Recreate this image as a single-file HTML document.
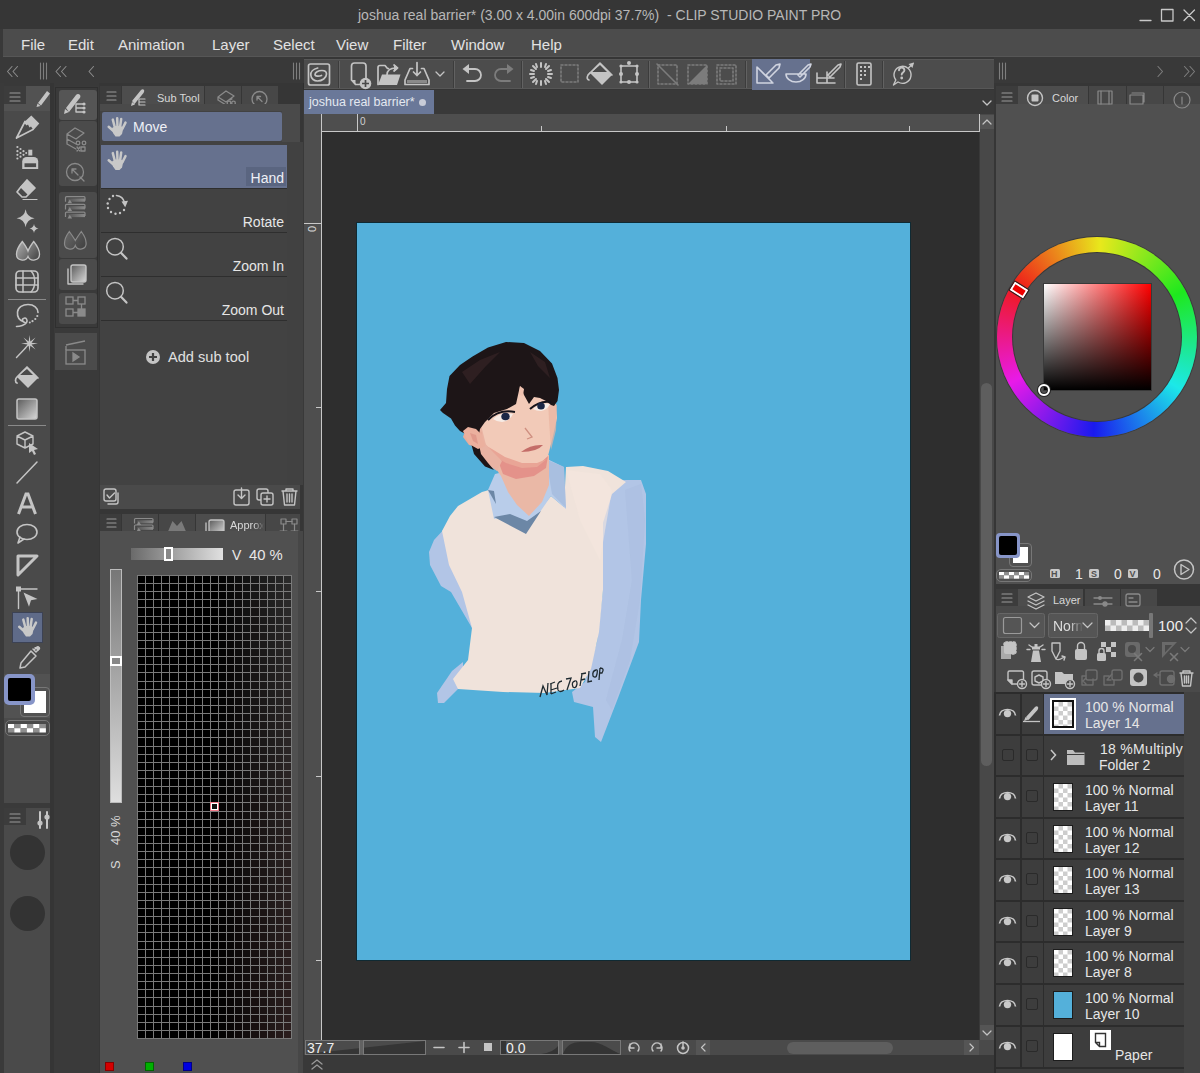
<!DOCTYPE html>
<html><head><meta charset="utf-8">
<style>
*{margin:0;padding:0;box-sizing:border-box}
html,body{width:1200px;height:1073px;overflow:hidden;background:#393939;font-family:"Liberation Sans",sans-serif;color:#dcdcdc}
.a{position:absolute}
svg.a{overflow:visible}
.t{position:absolute;white-space:nowrap;line-height:1}
.ic{fill:none;stroke:#c4c4c4;stroke-width:1.6;stroke-linecap:round;stroke-linejoin:round}
.dim{stroke:#7c7c7c}
.fl{fill:#c4c4c4;stroke:none}
</style></head><body>
<svg width="0" height="0" style="position:absolute"><defs>
<g id="hand"><path d="M5.5 11L9 9h5l3 1.5-1.5 6.5-2.5 2.5H9l-2.5-3.5z" fill="#c8c8c8"/><path d="M7.5 14.5L2.2 9.8 M8.5 11L6.3 2.6 M11 10.5L10.7 1.3 M13.5 10.5L14.7 1.9 M15.8 12L19 5.6" stroke="#c8c8c8" stroke-width="2.5" stroke-linecap="round" fill="none"/></g>
</defs></svg>
<!-- ============ TITLE BAR ============ -->
<div class="a" style="left:0;top:0;width:1200px;height:29px;background:#363636"></div>
<div class="t" style="left:358px;top:8px;font-size:14px;color:#b8b8b8">joshua real barrier* (3.00 x 4.00in 600dpi 37.7%) &nbsp;- CLIP STUDIO PAINT PRO</div>
<svg class="a" style="left:1130px;top:0" width="70" height="29">
 <path class="ic" style="stroke:#c8c8c8;stroke-width:1.3" d="M10 20.5H21 M31.5 9.5h11.5v11.5H31.5z M54 10l10.5 10.5 M64.5 10L54 20.5"/>
</svg>
<!-- ============ MENU BAR ============ -->
<div class="a" style="left:3px;top:29px;width:1197px;height:28px;background:#4c4c4c;border-bottom:1px solid #565656"></div>
<div class="t" style="left:21px;top:37px;font-size:15px;color:#e2e2e2">File</div>
<div class="t" style="left:68px;top:37px;font-size:15px;color:#e2e2e2">Edit</div>
<div class="t" style="left:118px;top:37px;font-size:15px;color:#e2e2e2">Animation</div>
<div class="t" style="left:212px;top:37px;font-size:15px;color:#e2e2e2">Layer</div>
<div class="t" style="left:273px;top:37px;font-size:15px;color:#e2e2e2">Select</div>
<div class="t" style="left:336px;top:37px;font-size:15px;color:#e2e2e2">View</div>
<div class="t" style="left:393px;top:37px;font-size:15px;color:#e2e2e2">Filter</div>
<div class="t" style="left:451px;top:37px;font-size:15px;color:#e2e2e2">Window</div>
<div class="t" style="left:531px;top:37px;font-size:15px;color:#e2e2e2">Help</div>
<!-- ============ ROW 2 ============ -->
<div class="a" style="left:0;top:58px;width:1200px;height:28px;background:#393939"></div>
<svg class="a" style="left:0;top:58px" width="310" height="28">
 <path class="ic" style="stroke:#8c8c8c;stroke-width:1.1" d="M12 8.5l-4.5 5 4.5 5 M17.5 8.5l-4.5 5 4.5 5 M60.5 8.5l-4.5 5 4.5 5 M66 8.5l-4.5 5 4.5 5 M93.5 8.5l-4.5 5 4.5 5"/><path class="ic" style="stroke:#7e7e7e;stroke-width:1.1" d="M40.5 5v16 M43.5 5v16 M46.5 5v16 M293.5 5v16 M296.5 5v16 M299.5 5v16"/>
</svg>
<svg class="a" style="left:994px;top:58px" width="206" height="28">
 <path class="ic" style="stroke:#7e7e7e;stroke-width:1.1" d="M5.5 5v16 M8.5 5v16 M11.5 5v16 M164 8.5l4.5 5-4.5 5 M190.5 8.5l4.5 5-4.5 5 M196 8.5l4.5 5-4.5 5"/>
</svg>

<!-- ============ COMMAND BAR ============ -->
<div class="a" style="left:304px;top:57px;width:690px;height:33px;background:#363636"></div>
<div class="a" style="left:304px;top:59px;width:690px;height:30px;background:#4c4c4c;border-top:1px solid #575757;border-bottom:1px solid #575757"></div>
<div class="a" style="left:752px;top:59px;width:58px;height:31px;background:#66718e"></div>
<svg class="a" style="left:304px;top:59px" width="690" height="31">
 <g style="stroke:#3c3c3c;stroke-width:1"><path d="M34.5 2v27 M149.5 2v27 M217.5 2v27 M344.5 2v27 M441.5 2v27 M540.5 2v27 M578.5 2v27"/></g>
 <g style="stroke:#626262;stroke-width:1"><path d="M35.5 2v27 M150.5 2v27 M218.5 2v27 M345.5 2v27 M442.5 2v27 M541.5 2v27 M579.5 2v27"/></g>
 <!-- csp logo -->
 <rect class="ic" x="4.5" y="5" width="21" height="21" rx="2" style="stroke-width:1.7"/>
 <path class="ic" d="M13.7 9C9 10 6.5 13 6.8 16C7 20 10.5 22 13.5 22C18 22 22.5 19 22.5 15C22.5 12.5 20 11.5 18 11.5C14 11.5 11 13.5 11 15.5C11 17.5 15 17.5 17.5 16.5" style="stroke-width:1.7"/>
 <!-- new -->
 <path class="ic" d="M47.5 21V7a3 3 0 013-3h8.5a3 3 0 013 3v12 M47.5 21l4 4.5h5" style="stroke-width:1.7"/><path class="fl" d="M47.5 21l4 4.5V21z"/>
 <circle cx="61.5" cy="24.5" r="5.8" style="fill:#c4c4c4"/><path d="M61.5 21v7M58 24.5h7" style="stroke:#4a4a4a;stroke-width:1.7"/>
 <!-- open -->
 <path class="ic" d="M74 25.5V8.5a2 2 0 012-2h5l2.5 3h1" style="stroke-width:1.7"/><path class="fl" d="M78 15.5h18.5l-3.5 10.5H74z"/><path class="ic" d="M83 16c0-4.5 3-7 9-7 M90 6l3.5 3-3.5 3" style="stroke-width:1.7"/><path class="fl" d="M90 5.5l4.5 3.5-4.5 3.5z"/>
 <!-- save -->
 <path class="ic" d="M108.5 9.5h-2.5l-5 11.5v4.5h24v-4.5l-5-11.5h-2.5" style="stroke-width:1.7"/><rect x="103" y="21" width="20" height="3" style="fill:#8a8a8a"/><path class="ic" d="M113 3.5v13 M109.5 13l3.5 3.5 3.5-3.5" style="stroke-width:1.7"/>
 <path class="ic" d="M132 13l4 4 4-4" style="stroke-width:1.3"/>
 <!-- undo redo -->
 <path class="ic" d="M165 10h6a6 6 0 010 12h-8" style="stroke-width:1.8"/><path class="fl" d="M158.5 10l6.5-5v10z"/>
 <path class="ic dim" d="M203 10h-6a6 6 0 000 12h9" style="stroke-width:1.8"/><path d="M209.5 10l-6.5-5v10z" style="fill:#7c7c7c"/>
 <!-- spinner -->
 <g class="ic" style="stroke-width:2"><path d="M237 4v4 M237 22v4 M226 15h4 M244 15h4 M229 7l3 3 M242 20l3 3 M245 7l-3 3 M232 20l-3 3 M232 5l1 3 M241 22l1 3 M227 11l3 1 M244 18l3 1 M242 5l-1 3 M233 22l-1 3 M247 11l-3 1 M230 18l-3 1"/></g>
 <!-- select dashed -->
 <rect class="ic dim" x="257" y="6" width="17" height="17" stroke-dasharray="2 2"/>
 <!-- bucket -->
 <path class="fl" d="M296 4l12 12-10 10-12-12z"/><path class="ic" d="M286 14c-3 2-4 6-1 7" />
 <path d="M288 13h15l-7-7z" style="fill:#4a4a4a"/><path class="ic" d="M286 14l10-10 12 12"/>
 <!-- transform -->
 <rect class="ic" x="317" y="7" width="16" height="16"/>
 <g class="fl"><circle cx="325" cy="4" r="2"/><circle cx="317" cy="15" r="2"/><circle cx="333" cy="15" r="2"/><circle cx="325" cy="23" r="2"/><circle cx="317" cy="23" r="1.6"/><circle cx="333" cy="23" r="1.6"/><circle cx="317" cy="7" r="1.6"/><circle cx="333" cy="7" r="1.6"/></g>
 <!-- dim three -->
 <g class="ic dim" stroke-dasharray="2 2"><rect x="354" y="6" width="19" height="19"/><rect x="384" y="6" width="19" height="19"/><rect x="413" y="6" width="19" height="19"/><rect x="416" y="9" width="13" height="13"/></g>
 <path class="ic dim" d="M353 5l21 21"/><path d="M403 6v19h-19z" style="fill:#7c7c7c"/>
 <!-- highlighted -->
 <path class="ic" d="M453 8v16h16 M453 8l15 15 M472 6l4-1-1 4-10 10-3-3z" style="stroke:#d0d4e0"/>
 <path class="ic" d="M482 15h20a10 8 0 01-20 0 M504 6l3-1-1 3-10 10-2-2z" style="stroke:#d0d4e0"/>
 <path class="ic" d="M513 14v10h18 M513 19h17 M523 13v11 M534 6l3-1-1 3-10 10-2-2z"/>
 <!-- device -->
 <rect class="ic" x="553" y="4" width="14" height="22" rx="1.5"/>
 <g class="fl"><rect x="556" y="7" width="2" height="2"/><rect x="560" y="7" width="2" height="2"/><rect x="564" y="7" width="2" height="2"/><rect x="556" y="11" width="2" height="2"/><rect x="560" y="11" width="2" height="2"/><rect x="556" y="15" width="2" height="2"/><rect x="560" y="15" width="2" height="2"/><rect x="556" y="19" width="2" height="2"/></g>
 <!-- help -->
 <path class="ic" d="M591.8 21A8.5 8.5 0 1 1 594 23l-4.5 3z M604.5 9l4.5-4.5" style="stroke-width:1.4"/><path class="ic" d="M595 11.3a2.7 2.7 0 115.4 0c0 2.3-2.7 2.3-2.7 4.3" style="stroke-width:1.9"/><path class="fl" d="M610 3.5l-1.5 5.5-4-4z"/><circle cx="597.7" cy="19" r="1.4" class="fl"/>
</svg>

<!-- ============ LEFT TOOLBAR ============ -->
<div class="a" style="left:0;top:83px;width:4px;height:990px;background:#3a3a3a"></div>
<div class="a" style="left:4px;top:86px;width:46px;height:717px;background:#4a4a4a"></div>
<div class="a" style="left:4px;top:86px;width:22px;height:18px;background:#3c3c3c"></div>
<div class="a" style="left:26px;top:86px;width:24px;height:18px;background:#525252"></div>
<div class="a" style="left:4px;top:104px;width:46px;height:7px;background:#525252"></div>
<div class="a" style="left:4px;top:674px;width:46px;height:44px;background:#525252"></div>
<div class="a" style="left:12px;top:612px;width:31px;height:31px;background:#3c4254"></div>
<div class="a" style="left:13px;top:613px;width:29px;height:29px;background:#5f6b89"></div>
<div class="a" style="left:4px;top:803px;width:46px;height:5px;background:#3a3a3a"></div>
<div class="a" style="left:4px;top:808px;width:46px;height:265px;background:#4a4a4a"></div>
<div class="a" style="left:4px;top:808px;width:22px;height:17px;background:#3c3c3c"></div>
<div class="a" style="left:10px;top:835px;width:35px;height:35px;border-radius:50%;background:#333"></div>
<div class="a" style="left:10px;top:896px;width:35px;height:35px;border-radius:50%;background:#333"></div>
<svg class="a" style="left:0;top:83px" width="54" height="990">
 <path class="ic" style="stroke:#9a9a9a;stroke-width:1.2" d="M10 10h10 M10 14h10 M10 18h10"/>
 <path class="fl" d="M38 20l9-12 3 2.5-9 12z M36.5 24l1-3.5 3 2.5z"/>
 <!-- pen -->
 <path class="ic" d="M16.5 55L25 38.5 M16.5 55L33 46.5" style="stroke-width:1.7"/><path class="fl" d="M23.8 39.5L31.3 32.5L39.3 40.6L33.5 47L31 43.5L29.5 44.5L28 41.5L26.5 42.5z"/>
 <!-- airbrush -->
 <g class="fl"><circle cx="17.4" cy="64" r="1.1"/><circle cx="17.4" cy="68.2" r="1.1"/><circle cx="17.4" cy="71.8" r="1.1"/><circle cx="17.4" cy="75.5" r="1.1"/><circle cx="20.5" cy="66" r="1.1"/><circle cx="20.5" cy="70" r="1.1"/><circle cx="20.5" cy="73.7" r="1.1"/><circle cx="23.5" cy="68.2" r="1.1"/><circle cx="23.5" cy="71.8" r="1.1"/><circle cx="26.2" cy="70" r="1"/><rect x="28.3" y="66.7" width="4" height="5.8"/></g>
 <path class="fl" d="M22.2 86V78.5a4.5 4.5 0 014.5-4.5h7a4.5 4.5 0 014.5 4.5V86z"/><rect x="24.5" y="80.3" width="11.6" height="3.8" style="fill:#4a4a4a"/>
 <!-- eraser -->
 <path class="fl" d="M27 97l8 8-7 7-8-8z"/><path class="ic" d="M27 97l8 8-9 9h-4l-5-5 3-4z" style="stroke-width:1.7"/><path class="ic" d="M23 116.5h14" style="stroke-width:1.2"/>
 <!-- sparkle -->
 <path class="fl" d="M25.6 126.3Q26.8 134.1 34.6 135.3Q26.8 136.5 25.6 144.3Q24.4 136.5 16.6 135.3Q24.4 134.1 25.6 126.3z M34 141Q34.6 144.9 38.5 145.5Q34.6 146.1 34 150Q33.4 146.1 29.5 145.5Q33.4 144.9 34 141z"/>
 <!-- blend drops -->
 <defs><linearGradient id="gr2" x1="0" y1="0" x2="1" y2="0.6"><stop offset="0" stop-color="#b0b0b0"/><stop offset="1" stop-color="#505050"/></linearGradient></defs>
 <path d="M22.3 158.5C18 164 16.5 168 16.5 171a6 6 0 0011.5 2.5 6 6 0 0011.5-2.5c0-3-1.5-7-5.8-12.5-3 4-5 7.5-5.7 9.5-.7-2-2.7-5.5-5.7-9.5z" style="fill:url(#gr2);stroke:#c4c4c4;stroke-width:1.3"/>
 <!-- mesh -->
 <rect class="ic" x="16" y="188" width="22" height="21" rx="4" style="stroke-width:1.7"/><path class="ic" d="M16 195h22 M16 202h22 M23 188v21 M31 188c5 5 5 16 0 21" style="stroke-width:1.5"/>
 <path d="M8 216.5h38" style="stroke:#8a8a8a;stroke-width:1"/>
 <!-- lasso -->
 <path class="ic" d="M16.5 243.5C20 243.5 25 242 26.5 239.5C28 237 26 234.5 24 235.2C21.5 236 22 239 25.5 239.8 M24.5 239.2C19 237.5 17 234 17.5 229C18 224 23 221.5 28 221.5C34 221.5 38 225 38 229.5" style="stroke-width:1.6"/>
 <g class="fl"><circle cx="37.3" cy="233" r="1.1"/><circle cx="35.3" cy="236" r="1.1"/><circle cx="32.5" cy="238.2" r="1.1"/><circle cx="29.8" cy="239.5" r="1"/></g>
 <!-- wand -->
 <path class="fl" d="M29.50 252.10 L30.34 258.57 L35.51 254.59 L31.53 259.76 L38.00 260.60 L31.53 261.44 L35.51 266.61 L30.34 262.63 L29.50 269.10 L28.66 262.63 L23.49 266.61 L27.47 261.44 L21.00 260.60 L27.47 259.76 L23.49 254.59 L28.66 258.57z"/><path class="ic" d="M16.5 274.5l9.5-10" style="stroke-width:1.4"/>
 <!-- bucket -->
 <path class="fl" d="M27 284l11 11-10 10-11-11z"/><path d="M19 292h14l-6-6z" style="fill:#4a4a4a"/><path class="ic" d="M17 294l10-10 11 11 M17 294c-2 2-2 5 0 6" style="stroke-width:1.7"/>
 <!-- gradient -->
 <defs><linearGradient id="gr1" x1="0" y1="0" x2="1" y2="1"><stop offset="0" stop-color="#5a5a5a"/><stop offset="1" stop-color="#d8d8d8"/></linearGradient></defs>
 <rect x="17" y="316" width="20" height="20" rx="2" style="fill:url(#gr1);stroke:#c4c4c4;stroke-width:1.5"/>
 <path d="M8 342.5h38" style="stroke:#8a8a8a;stroke-width:1"/>
 <!-- 3d -->
 <path class="ic" d="M17 353l8-4 8 4v8l-8 4-8-4z M17 353l8 4 8-4 M25 357v8" style="stroke-width:1.4"/><path class="fl" d="M29 360l9 6-4 1 2 4-2 1-2-4-3 2z"/>
 <!-- line -->
 <path class="ic" d="M17 400l20-21" style="stroke-width:1.5"/>
 <!-- A -->
 <path class="ic" d="M18.5 431l7.5-20h2l7.5 20 M21.5 424h11" style="stroke-width:3;stroke-linecap:butt;stroke-linejoin:miter"/>
 <!-- balloon -->
 <ellipse class="ic" cx="27" cy="449" rx="10" ry="7.5" style="stroke-width:1.6"/><path class="ic" d="M20 454l-2 6 6-4" style="stroke-width:1.6"/>
 <!-- ruler -->
 <path class="ic" d="M18 473h19l-19 19z" style="stroke-width:3"/>
 <!-- obj select -->
 <g transform="translate(0,3.5)"><rect class="fl" x="16" y="500" width="5" height="5"/><path class="ic" d="M18.5 502v20 M18.5 502.5h18.5" style="stroke-width:1.4"/><path class="fl" d="M23.5 506l14 6.5-6.5 1.2-2 6.5z"/></g>
 <!-- hand -->
 <use href="#hand" x="17" y="534"/>
 <!-- eyedropper -->
 <path class="ic" d="M33 566l3 3 M34 567l3-3c1-1 3 1 2 2l-3 3 M31 568l5 5-11 11-5 1 1-5z" style="stroke-width:1.5"/><path class="fl" d="M34 564l4 4 2-2c1-1-1-3-2-2z"/>
</svg>
<!-- swatches -->
<div class="a" style="left:20px;top:687px;width:30px;height:30px;border-radius:4px;border:1px solid #777;background:#525252"></div>
<div class="a" style="left:24px;top:691px;width:22px;height:22px;background:#fff"></div>
<div class="a" style="left:4px;top:674px;width:31px;height:31px;border-radius:5px;background:#8795c8"></div>
<div class="a" style="left:8px;top:678px;width:23px;height:23px;border-radius:2px;background:#000"></div>
<div class="a" style="left:5px;top:720px;width:45px;height:16px;border-radius:5px;border:1px solid #777"></div>
<svg class="a" style="left:8px;top:723.5px" width="38" height="9"><rect x="0.0" y="0.0" width="6.4" height="4.3" fill="#fff"/><rect x="6.3" y="0.0" width="6.4" height="4.3" fill="#8e8e8e"/><rect x="12.6" y="0.0" width="6.4" height="4.3" fill="#fff"/><rect x="18.9" y="0.0" width="6.4" height="4.3" fill="#8e8e8e"/><rect x="25.2" y="0.0" width="6.4" height="4.3" fill="#fff"/><rect x="31.5" y="0.0" width="6.4" height="4.3" fill="#8e8e8e"/><rect x="0.0" y="4.2" width="6.4" height="4.3" fill="#8e8e8e"/><rect x="6.3" y="4.2" width="6.4" height="4.3" fill="#fff"/><rect x="12.6" y="4.2" width="6.4" height="4.3" fill="#8e8e8e"/><rect x="18.9" y="4.2" width="6.4" height="4.3" fill="#fff"/><rect x="25.2" y="4.2" width="6.4" height="4.3" fill="#8e8e8e"/><rect x="31.5" y="4.2" width="6.4" height="4.3" fill="#fff"/></svg>
<svg class="a" style="left:0;top:808px" width="54" height="30">
 <path class="ic" style="stroke:#9a9a9a;stroke-width:1.2" d="M10 6h10 M10 10h10 M10 14h10"/>
 <path class="ic" style="stroke:#c8c8c8;stroke-width:2" d="M40 4v16 M47 4v16"/><circle cx="40" cy="15" r="2.6" class="fl"/><circle cx="47" cy="9" r="2.6" class="fl"/>
</svg>
<!-- ============ SUB TOOL GROUP COLUMN ============ -->
<div class="a" style="left:50px;top:83px;width:4px;height:990px;background:#353535"></div>
<div class="a" style="left:54px;top:86px;width:45px;height:987px;background:#3a3a3a"></div>
<div class="a" style="left:55px;top:87px;width:43px;height:241px;background:#3a3a3a;border:1px solid #2f2f2f"></div>
<div class="a" style="left:59px;top:90px;width:38px;height:30px;background:#555;border-radius:3px"></div>
<div class="a" style="left:59px;top:121px;width:38px;height:65px;background:#4b4b4b;border-radius:3px"></div>
<div class="a" style="left:59px;top:192px;width:38px;height:66px;background:#4b4b4b;border-radius:3px"></div>
<div class="a" style="left:59px;top:259px;width:38px;height:31px;background:#4b4b4b;border-radius:3px"></div>
<div class="a" style="left:59px;top:293px;width:38px;height:31px;background:#4b4b4b;border-radius:3px"></div>
<div class="a" style="left:55px;top:333px;width:42px;height:37px;background:#4b4b4b"></div>
<svg class="a" style="left:54px;top:83px" width="46" height="300">
 <path class="fl" d="M12 25l10-13c1-1.5 3-1.5 4 0s0 3-1 4l-10 13z M10 31l1-5 4 3z"/>
 <path class="ic" d="M22 21h7 M22 25h7 M22 29h7 M22 21v8" style="stroke-width:1.4"/><g class="fl"><circle cx="30" cy="21" r="1.6"/><circle cx="30" cy="25" r="1.6"/><circle cx="30" cy="29" r="1.6"/></g>
 <g class="ic dim" style="stroke:#8a8a8a;stroke-width:1.3"><path d="M13 51l8-6 9 5-8 6z M13 56l9 5 M13 61l9 5 M13 51v5 M13 56v5"/><circle cx="24" cy="60" r="1.8"/><circle cx="30" cy="60" r="1.8"/><rect x="27" y="64" width="4" height="4"/><path d="M23 64l3 4 M26 64l-3 4"/>
 <circle cx="21" cy="89" r="8.5"/><path d="M18 86l6 6 M18 86v4 M18 86h4 M26 94l4 4"/></g>
 <defs><linearGradient id="gr3" x1="0" x2="1"><stop offset="0" stop-color="#555"/><stop offset="1" stop-color="#8a8a8a"/></linearGradient><linearGradient id="gr4" x1="0" y1="0" x2="1" y2="0.6"><stop offset="0" stop-color="#6a6a6a"/><stop offset="1" stop-color="#454545"/></linearGradient></defs>
 <path d="M11.5 118.7V114.7a1 1 0 011-1H30a1 1 0 011 1V117.7" style="fill:none;stroke:#8a8a8a;stroke-width:1.2"/><rect x="14" y="115.5" width="17" height="3.2" fill="url(#gr3)"/><path d="M13.5 120.2l2.3-3.8 2.3 3.8z" fill="#8a8a8a"/><path d="M11.5 126.4V122.4a1 1 0 011-1H30a1 1 0 011 1V125.4" style="fill:none;stroke:#8a8a8a;stroke-width:1.2"/><rect x="14" y="123.2" width="17" height="3.2" fill="url(#gr3)"/><path d="M13.5 127.9l2.3-3.8 2.3 3.8z" fill="#8a8a8a"/><path d="M11.5 134.1V130.1a1 1 0 011-1H30a1 1 0 011 1V133.1" style="fill:none;stroke:#8a8a8a;stroke-width:1.2"/><rect x="14" y="130.9" width="17" height="3.2" fill="url(#gr3)"/><path d="M13.5 135.6l2.3-3.8 2.3 3.8z" fill="#8a8a8a"/>
 <path d="M15.3 148.5C12 153 10.5 157 10.5 160a5.6 5.6 0 0010.8 2.5 5.6 5.6 0 0010.8-2.5c0-3-1.5-7-4.8-11.5-2.8 3.8-4.8 7-6 9-1.2-2-3.2-5.2-6-9z" style="fill:url(#gr4);stroke:#8a8a8a;stroke-width:1.2"/>
 <rect x="17" y="182" width="15" height="17" rx="2" style="fill:url(#gr1);stroke:#c4c4c4;stroke-width:1.4"/><path class="ic" d="M14 186v15h15" style="stroke-width:1.4"/>
 <g style="stroke:#8a8a8a;stroke-width:1.3;fill:none"><rect x="12" y="214" width="7" height="7"/><rect x="24" y="214" width="7" height="7"/><rect x="12" y="226" width="7" height="7"/><rect x="24" y="226" width="7" height="7" style="fill:#8a8a8a"/><path d="M19 217.5h5 M27.5 221v5 M19 229.5h5"/></g>
 <g style="stroke:#8a8a8a;stroke-width:1.3;fill:none"><rect x="12" y="267" width="19" height="14"/><path d="M12 262l19-4 M12 263v4"/><path d="M19 270v8l6-4z" style="fill:#8a8a8a"/></g>
</svg>

<!-- ============ SUB TOOL PANEL ============ -->
<div class="a" style="left:99px;top:83px;width:205px;height:990px;background:#363636"></div>
<div class="a" style="left:100px;top:86px;width:21px;height:18px;background:#3c3c3c"></div>
<div class="a" style="left:122px;top:86px;width:82px;height:18px;background:#4d4d4d"></div>
<div class="a" style="left:205px;top:86px;width:36px;height:18px;background:#474747"></div>
<div class="a" style="left:242px;top:86px;width:36px;height:18px;background:#474747"></div>
<div class="a" style="left:100px;top:104px;width:200px;height:7px;background:#4a4a4a"></div>
<div class="a" style="left:100px;top:111px;width:198px;height:374px;background:#424242"></div>
<div class="a" style="left:282px;top:111px;width:18px;height:31px;background:#4a4a4a"></div>
<div class="a" style="left:287px;top:142px;width:16px;height:343px;background:#414141"></div><div class="a" style="left:303px;top:83px;width:1px;height:990px;background:#2f2f2f"></div>
<div class="a" style="left:102px;top:112px;width:180px;height:29px;background:#66718e;border-radius:2px"></div>
<div class="a" style="left:101px;top:145px;width:186px;height:43px;background:#66718e"></div>
<div class="a" style="left:246px;top:167px;width:40px;height:19px;background:#5a6580"></div>
<div class="a" style="left:101px;top:188px;width:186px;height:1px;background:#2e2e2e"></div>
<div class="a" style="left:101px;top:232px;width:186px;height:1px;background:#2e2e2e"></div>
<div class="a" style="left:101px;top:276px;width:186px;height:1px;background:#2e2e2e"></div>
<div class="a" style="left:101px;top:320px;width:186px;height:1px;background:#2e2e2e"></div>
<div class="t" style="left:157px;top:93px;font-size:11px;color:#d8d8d8">Sub Tool</div>
<div class="t" style="left:133px;top:120px;font-size:14px;color:#eef0f6">Move</div>
<div class="t" style="right:916px;top:171px;font-size:14px;color:#eef0f6">Hand</div>
<div class="t" style="right:916px;top:215px;font-size:14px;color:#e6e6e6">Rotate</div>
<div class="t" style="right:916px;top:259px;font-size:14px;color:#e6e6e6">Zoom In</div>
<div class="t" style="right:916px;top:303px;font-size:14px;color:#e6e6e6">Zoom Out</div>
<div class="t" style="left:168px;top:349.5px;font-size:14.6px;color:#e0e0e0">Add sub tool</div>
<svg class="a" style="left:100px;top:83px" width="200" height="430">
 <path class="ic" style="stroke:#9a9a9a;stroke-width:1.2" d="M7 9h9 M7 13h9 M7 17h9"/>
 <path class="fl" d="M32 18l9-11c1-1 2.5-1 3 0s0 2-.5 3l-9 11z M31 23l1-4 3 2.5z"/><path class="ic" d="M39 16h6 M39 19h6 M39 22h6 M39 16v6" style="stroke-width:1.2"/>

 <!-- hand icons -->
 <use href="#hand" x="6.5" y="34"/><use href="#hand" x="6.5" y="67.5"/>
 <g class="fl"><circle cx="13" cy="113" r="1.2"/><circle cx="9.5" cy="116" r="1.2"/><circle cx="7.7" cy="120.5" r="1.2"/><circle cx="8" cy="125" r="1.2"/><circle cx="11" cy="129" r="1.2"/><circle cx="15.5" cy="130.8" r="1.2"/><circle cx="20" cy="130" r="1.2"/><circle cx="24" cy="127" r="1.2"/></g><path class="ic" d="M16.5 112.5c4 .5 7 3 8 7" style="stroke-width:1.6"/><path class="fl" d="M21.5 118.5l6.5-.8-2.8 6.6z"/>
 <circle class="ic" cx="15" cy="163.7" r="8.3" style="stroke-width:1.5"/><path class="ic" d="M21 169.8l5.5 5.8" style="stroke-width:2.2"/>
 <circle class="ic" cx="15" cy="207.7" r="8.3" style="stroke-width:1.5"/><path class="ic" d="M21 213.8l5.5 5.8" style="stroke-width:2.2"/>
 <circle cx="53" cy="274" r="7" class="fl"/><path d="M53 270v8 M49 274h8" style="stroke:#424242;stroke-width:2.2"/>
</svg>
<svg class="a" style="left:200px;top:83px;overflow:hidden" width="80" height="21"><g class="ic" style="stroke:#8a8a8a;stroke-width:1.3"><path d="M18 14l8-6 8 5-8 6z M18 17l8 5 M18 14v3 M30 17l2-1"/><circle cx="29" cy="20" r="1.8"/><circle cx="33.5" cy="20" r="1.8"/><circle cx="59.5" cy="16" r="7.5"/><path d="M57 13.5l5 5 M57 13.5v3.5 M57 13.5h3.5"/></g></svg>
<!-- sub tool bottom bar -->
<div class="a" style="left:100px;top:485px;width:200px;height:24px;background:#4a4a4a"></div>
<svg class="a" style="left:100px;top:485px" width="200" height="24">
 <g class="ic" style="stroke-width:1.4"><rect x="4" y="4" width="12" height="12" rx="2"/><path d="M18 8v9a2 2 0 01-2 2H8" /><path d="M7 10l2.5 3 5-5"/>
 <rect x="134" y="5" width="15" height="15" rx="2"/><path d="M141.5 3v10 M138 10l3.5 3.5 3.5-3.5"/>
 <rect x="157" y="4" width="11" height="11" rx="2"/><rect x="161" y="8" width="12" height="12" rx="2" style="fill:#4a4a4a"/><path d="M167 11v6 M164 14h6"/>
 <path d="M182 6h15 M186 6V4h7v2 M183 6l1.5 14h10l1.5-14 M187 9v8 M189.5 9v8 M192 9v8"/></g>
</svg>
<!-- ============ COLOR SET PANEL ============ -->
<div class="a" style="left:100px;top:514px;width:21px;height:17px;background:#3c3c3c"></div>
<div class="a" style="left:122px;top:514px;width:36px;height:17px;background:#474747"></div>
<div class="a" style="left:159px;top:514px;width:36px;height:17px;background:#474747"></div>
<div class="a" style="left:196px;top:514px;width:69px;height:17px;background:#4d4d4d"></div>
<div class="a" style="left:266px;top:514px;width:34px;height:17px;background:#474747"></div>
<div class="a" style="left:100px;top:531px;width:198px;height:542px;background:#505050"></div>
<div class="a" style="left:298px;top:531px;width:5px;height:542px;background:#474747"></div>
<div class="t" style="left:230px;top:520px;font-size:11px;color:#d8d8d8;width:34px;overflow:hidden;-webkit-mask-image:linear-gradient(90deg,#000 70%,transparent)">Approx</div>
<svg class="a" style="left:100px;top:514px;overflow:hidden" width="200" height="17">
 <path class="ic" style="stroke:#9a9a9a;stroke-width:1.2" d="M7 5h9 M7 9h9 M7 13h9"/>
 <g><path d="M34.5 9.5V5.5a1 1 0 011-1H52a1 1 0 011 1V8.5" style="fill:none;stroke:#8a8a8a;stroke-width:1.2"/><rect x="37" y="6.3" width="16" height="3" fill="url(#gr3)"/><path d="M36.5 11.0l2.3-3.8 2.3 3.8z" fill="#8a8a8a"/><path d="M34.5 16.0V12.0a1 1 0 011-1H52a1 1 0 011 1V15.0" style="fill:none;stroke:#8a8a8a;stroke-width:1.2"/><rect x="37" y="12.8" width="16" height="3" fill="url(#gr3)"/><path d="M36.5 17.5l2.3-3.8 2.3 3.8z" fill="#8a8a8a"/></g><path d="M68 17.5L72.5 7 77 12 81.5 7 86 17.5z" style="fill:#7a7a7a"/>
 <rect x="109" y="6" width="15" height="14" rx="2" style="fill:url(#gr1);stroke:#c4c4c4;stroke-width:1.3"/><path class="ic" d="M106 9v12h14" style="stroke-width:1.3"/>
 <g class="ic" style="stroke:#8a8a8a;stroke-width:1.2"><rect x="181" y="5" width="5" height="5"/><rect x="192" y="5" width="5" height="5"/><path d="M186 7.5h6 M183.5 10v7 M194.5 10v7 M180 17h7 M191 17h7"/></g>
</svg>
<!-- V slider -->
<div class="a" style="left:131px;top:548px;width:92px;height:12px;background:linear-gradient(90deg,#6a6a6a,#e0e0e0)"></div>
<div class="a" style="left:164px;top:547px;width:9px;height:14px;border:2px solid #fff;background:#888"></div>
<div class="t" style="left:232px;top:548px;font-size:14px;color:#e8e8e8">V</div>
<div class="t" style="left:249px;top:547.5px;font-size:14.8px;color:#e8e8e8">40 %</div>
<!-- vertical slider -->
<div class="a" style="left:110px;top:569px;width:12px;height:234px;border:1px solid #bcbcbc;background:linear-gradient(180deg,#777,#dedede)"></div>
<div class="a" style="left:110px;top:656px;width:12px;height:10px;border:2px solid #fff;background:#888"></div>
<div class="t" style="left:109px;top:845px;font-size:13px;color:#d8d8d8;transform:rotate(-90deg);transform-origin:0 0">40 %</div>
<div class="t" style="left:109px;top:869px;font-size:13px;color:#d8d8d8;transform:rotate(-90deg);transform-origin:0 0">S</div>
<svg class="a" id="grid" style="left:137px;top:575px" width="156" height="466" shape-rendering="crispEdges"><rect x="0" y="0" width="155" height="464" fill="#7a7a7a"/><rect x="1" y="1" width="7" height="7" fill="#000000"/><rect x="9" y="1" width="7" height="7" fill="#000000"/><rect x="17" y="1" width="7" height="7" fill="#000000"/><rect x="25" y="1" width="7" height="7" fill="#000000"/><rect x="33" y="1" width="8" height="7" fill="#000000"/><rect x="42" y="1" width="7" height="7" fill="#000000"/><rect x="50" y="1" width="7" height="7" fill="#000000"/><rect x="58" y="1" width="7" height="7" fill="#000000"/><rect x="66" y="1" width="7" height="7" fill="#000000"/><rect x="74" y="1" width="7" height="7" fill="#000000"/><rect x="82" y="1" width="7" height="7" fill="#040404"/><rect x="90" y="1" width="7" height="7" fill="#090909"/><rect x="98" y="1" width="7" height="7" fill="#0e0e0e"/><rect x="106" y="1" width="7" height="7" fill="#121212"/><rect x="114" y="1" width="8" height="7" fill="#171717"/><rect x="123" y="1" width="7" height="7" fill="#1c1c1c"/><rect x="131" y="1" width="7" height="7" fill="#202020"/><rect x="139" y="1" width="7" height="7" fill="#252525"/><rect x="147" y="1" width="7" height="7" fill="#2a2a2a"/><rect x="1" y="9" width="7" height="7" fill="#000000"/><rect x="9" y="9" width="7" height="7" fill="#000000"/><rect x="17" y="9" width="7" height="7" fill="#000000"/><rect x="25" y="9" width="7" height="7" fill="#000000"/><rect x="33" y="9" width="8" height="7" fill="#000000"/><rect x="42" y="9" width="7" height="7" fill="#000000"/><rect x="50" y="9" width="7" height="7" fill="#000000"/><rect x="58" y="9" width="7" height="7" fill="#000000"/><rect x="66" y="9" width="7" height="7" fill="#000000"/><rect x="74" y="9" width="7" height="7" fill="#000000"/><rect x="82" y="9" width="7" height="7" fill="#040404"/><rect x="90" y="9" width="7" height="7" fill="#090909"/><rect x="98" y="9" width="7" height="7" fill="#0e0d0d"/><rect x="106" y="9" width="7" height="7" fill="#121212"/><rect x="114" y="9" width="8" height="7" fill="#171717"/><rect x="123" y="9" width="7" height="7" fill="#1c1b1b"/><rect x="131" y="9" width="7" height="7" fill="#202020"/><rect x="139" y="9" width="7" height="7" fill="#252525"/><rect x="147" y="9" width="7" height="7" fill="#2a2929"/><rect x="1" y="17" width="7" height="7" fill="#000000"/><rect x="9" y="17" width="7" height="7" fill="#000000"/><rect x="17" y="17" width="7" height="7" fill="#000000"/><rect x="25" y="17" width="7" height="7" fill="#000000"/><rect x="33" y="17" width="8" height="7" fill="#000000"/><rect x="42" y="17" width="7" height="7" fill="#000000"/><rect x="50" y="17" width="7" height="7" fill="#000000"/><rect x="58" y="17" width="7" height="7" fill="#000000"/><rect x="66" y="17" width="7" height="7" fill="#000000"/><rect x="74" y="17" width="7" height="7" fill="#000000"/><rect x="82" y="17" width="7" height="7" fill="#040404"/><rect x="90" y="17" width="7" height="7" fill="#090909"/><rect x="98" y="17" width="7" height="7" fill="#0e0d0d"/><rect x="106" y="17" width="7" height="7" fill="#121212"/><rect x="114" y="17" width="8" height="7" fill="#171717"/><rect x="123" y="17" width="7" height="7" fill="#1c1b1b"/><rect x="131" y="17" width="7" height="7" fill="#202020"/><rect x="139" y="17" width="7" height="7" fill="#252424"/><rect x="147" y="17" width="7" height="7" fill="#2a2929"/><rect x="1" y="25" width="7" height="7" fill="#000000"/><rect x="9" y="25" width="7" height="7" fill="#000000"/><rect x="17" y="25" width="7" height="7" fill="#000000"/><rect x="25" y="25" width="7" height="7" fill="#000000"/><rect x="33" y="25" width="8" height="7" fill="#000000"/><rect x="42" y="25" width="7" height="7" fill="#000000"/><rect x="50" y="25" width="7" height="7" fill="#000000"/><rect x="58" y="25" width="7" height="7" fill="#000000"/><rect x="66" y="25" width="7" height="7" fill="#000000"/><rect x="74" y="25" width="7" height="7" fill="#000000"/><rect x="82" y="25" width="7" height="7" fill="#040404"/><rect x="90" y="25" width="7" height="7" fill="#090909"/><rect x="98" y="25" width="7" height="7" fill="#0e0d0d"/><rect x="106" y="25" width="7" height="7" fill="#121212"/><rect x="114" y="25" width="8" height="7" fill="#171616"/><rect x="123" y="25" width="7" height="7" fill="#1c1b1b"/><rect x="131" y="25" width="7" height="7" fill="#202020"/><rect x="139" y="25" width="7" height="7" fill="#252424"/><rect x="147" y="25" width="7" height="7" fill="#2a2929"/><rect x="1" y="33" width="7" height="8" fill="#000000"/><rect x="9" y="33" width="7" height="8" fill="#000000"/><rect x="17" y="33" width="7" height="8" fill="#000000"/><rect x="25" y="33" width="7" height="8" fill="#000000"/><rect x="33" y="33" width="8" height="8" fill="#000000"/><rect x="42" y="33" width="7" height="8" fill="#000000"/><rect x="50" y="33" width="7" height="8" fill="#000000"/><rect x="58" y="33" width="7" height="8" fill="#000000"/><rect x="66" y="33" width="7" height="8" fill="#000000"/><rect x="74" y="33" width="7" height="8" fill="#000000"/><rect x="82" y="33" width="7" height="8" fill="#040404"/><rect x="90" y="33" width="7" height="8" fill="#090909"/><rect x="98" y="33" width="7" height="8" fill="#0e0d0d"/><rect x="106" y="33" width="7" height="8" fill="#121212"/><rect x="114" y="33" width="8" height="8" fill="#171616"/><rect x="123" y="33" width="7" height="8" fill="#1c1b1b"/><rect x="131" y="33" width="7" height="8" fill="#202020"/><rect x="139" y="33" width="7" height="8" fill="#252424"/><rect x="147" y="33" width="7" height="8" fill="#2a2929"/><rect x="1" y="42" width="7" height="7" fill="#000000"/><rect x="9" y="42" width="7" height="7" fill="#000000"/><rect x="17" y="42" width="7" height="7" fill="#000000"/><rect x="25" y="42" width="7" height="7" fill="#000000"/><rect x="33" y="42" width="8" height="7" fill="#000000"/><rect x="42" y="42" width="7" height="7" fill="#000000"/><rect x="50" y="42" width="7" height="7" fill="#000000"/><rect x="58" y="42" width="7" height="7" fill="#000000"/><rect x="66" y="42" width="7" height="7" fill="#000000"/><rect x="74" y="42" width="7" height="7" fill="#000000"/><rect x="82" y="42" width="7" height="7" fill="#040404"/><rect x="90" y="42" width="7" height="7" fill="#090909"/><rect x="98" y="42" width="7" height="7" fill="#0e0d0d"/><rect x="106" y="42" width="7" height="7" fill="#121212"/><rect x="114" y="42" width="8" height="7" fill="#171616"/><rect x="123" y="42" width="7" height="7" fill="#1c1b1b"/><rect x="131" y="42" width="7" height="7" fill="#201f1f"/><rect x="139" y="42" width="7" height="7" fill="#252424"/><rect x="147" y="42" width="7" height="7" fill="#2a2828"/><rect x="1" y="50" width="7" height="7" fill="#000000"/><rect x="9" y="50" width="7" height="7" fill="#000000"/><rect x="17" y="50" width="7" height="7" fill="#000000"/><rect x="25" y="50" width="7" height="7" fill="#000000"/><rect x="33" y="50" width="8" height="7" fill="#000000"/><rect x="42" y="50" width="7" height="7" fill="#000000"/><rect x="50" y="50" width="7" height="7" fill="#000000"/><rect x="58" y="50" width="7" height="7" fill="#000000"/><rect x="66" y="50" width="7" height="7" fill="#000000"/><rect x="74" y="50" width="7" height="7" fill="#000000"/><rect x="82" y="50" width="7" height="7" fill="#040404"/><rect x="90" y="50" width="7" height="7" fill="#090909"/><rect x="98" y="50" width="7" height="7" fill="#0e0d0d"/><rect x="106" y="50" width="7" height="7" fill="#121212"/><rect x="114" y="50" width="8" height="7" fill="#171616"/><rect x="123" y="50" width="7" height="7" fill="#1c1b1b"/><rect x="131" y="50" width="7" height="7" fill="#201f1f"/><rect x="139" y="50" width="7" height="7" fill="#252424"/><rect x="147" y="50" width="7" height="7" fill="#2a2828"/><rect x="1" y="58" width="7" height="7" fill="#000000"/><rect x="9" y="58" width="7" height="7" fill="#000000"/><rect x="17" y="58" width="7" height="7" fill="#000000"/><rect x="25" y="58" width="7" height="7" fill="#000000"/><rect x="33" y="58" width="8" height="7" fill="#000000"/><rect x="42" y="58" width="7" height="7" fill="#000000"/><rect x="50" y="58" width="7" height="7" fill="#000000"/><rect x="58" y="58" width="7" height="7" fill="#000000"/><rect x="66" y="58" width="7" height="7" fill="#000000"/><rect x="74" y="58" width="7" height="7" fill="#000000"/><rect x="82" y="58" width="7" height="7" fill="#040404"/><rect x="90" y="58" width="7" height="7" fill="#090808"/><rect x="98" y="58" width="7" height="7" fill="#0e0d0d"/><rect x="106" y="58" width="7" height="7" fill="#121111"/><rect x="114" y="58" width="8" height="7" fill="#171616"/><rect x="123" y="58" width="7" height="7" fill="#1c1a1a"/><rect x="131" y="58" width="7" height="7" fill="#201f1f"/><rect x="139" y="58" width="7" height="7" fill="#252323"/><rect x="147" y="58" width="7" height="7" fill="#2a2828"/><rect x="1" y="66" width="7" height="7" fill="#000000"/><rect x="9" y="66" width="7" height="7" fill="#000000"/><rect x="17" y="66" width="7" height="7" fill="#000000"/><rect x="25" y="66" width="7" height="7" fill="#000000"/><rect x="33" y="66" width="8" height="7" fill="#000000"/><rect x="42" y="66" width="7" height="7" fill="#000000"/><rect x="50" y="66" width="7" height="7" fill="#000000"/><rect x="58" y="66" width="7" height="7" fill="#000000"/><rect x="66" y="66" width="7" height="7" fill="#000000"/><rect x="74" y="66" width="7" height="7" fill="#000000"/><rect x="82" y="66" width="7" height="7" fill="#040404"/><rect x="90" y="66" width="7" height="7" fill="#090808"/><rect x="98" y="66" width="7" height="7" fill="#0e0d0d"/><rect x="106" y="66" width="7" height="7" fill="#121111"/><rect x="114" y="66" width="8" height="7" fill="#171616"/><rect x="123" y="66" width="7" height="7" fill="#1c1a1a"/><rect x="131" y="66" width="7" height="7" fill="#201f1f"/><rect x="139" y="66" width="7" height="7" fill="#252323"/><rect x="147" y="66" width="7" height="7" fill="#2a2828"/><rect x="1" y="74" width="7" height="7" fill="#000000"/><rect x="9" y="74" width="7" height="7" fill="#000000"/><rect x="17" y="74" width="7" height="7" fill="#000000"/><rect x="25" y="74" width="7" height="7" fill="#000000"/><rect x="33" y="74" width="8" height="7" fill="#000000"/><rect x="42" y="74" width="7" height="7" fill="#000000"/><rect x="50" y="74" width="7" height="7" fill="#000000"/><rect x="58" y="74" width="7" height="7" fill="#000000"/><rect x="66" y="74" width="7" height="7" fill="#000000"/><rect x="74" y="74" width="7" height="7" fill="#000000"/><rect x="82" y="74" width="7" height="7" fill="#040404"/><rect x="90" y="74" width="7" height="7" fill="#090808"/><rect x="98" y="74" width="7" height="7" fill="#0e0d0d"/><rect x="106" y="74" width="7" height="7" fill="#121111"/><rect x="114" y="74" width="8" height="7" fill="#171616"/><rect x="123" y="74" width="7" height="7" fill="#1c1a1a"/><rect x="131" y="74" width="7" height="7" fill="#201f1f"/><rect x="139" y="74" width="7" height="7" fill="#252323"/><rect x="147" y="74" width="7" height="7" fill="#2a2828"/><rect x="1" y="82" width="7" height="7" fill="#000000"/><rect x="9" y="82" width="7" height="7" fill="#000000"/><rect x="17" y="82" width="7" height="7" fill="#000000"/><rect x="25" y="82" width="7" height="7" fill="#000000"/><rect x="33" y="82" width="8" height="7" fill="#000000"/><rect x="42" y="82" width="7" height="7" fill="#000000"/><rect x="50" y="82" width="7" height="7" fill="#000000"/><rect x="58" y="82" width="7" height="7" fill="#000000"/><rect x="66" y="82" width="7" height="7" fill="#000000"/><rect x="74" y="82" width="7" height="7" fill="#000000"/><rect x="82" y="82" width="7" height="7" fill="#040404"/><rect x="90" y="82" width="7" height="7" fill="#090808"/><rect x="98" y="82" width="7" height="7" fill="#0e0d0d"/><rect x="106" y="82" width="7" height="7" fill="#121111"/><rect x="114" y="82" width="8" height="7" fill="#171616"/><rect x="123" y="82" width="7" height="7" fill="#1c1a1a"/><rect x="131" y="82" width="7" height="7" fill="#201e1e"/><rect x="139" y="82" width="7" height="7" fill="#252323"/><rect x="147" y="82" width="7" height="7" fill="#2a2727"/><rect x="1" y="90" width="7" height="7" fill="#000000"/><rect x="9" y="90" width="7" height="7" fill="#000000"/><rect x="17" y="90" width="7" height="7" fill="#000000"/><rect x="25" y="90" width="7" height="7" fill="#000000"/><rect x="33" y="90" width="8" height="7" fill="#000000"/><rect x="42" y="90" width="7" height="7" fill="#000000"/><rect x="50" y="90" width="7" height="7" fill="#000000"/><rect x="58" y="90" width="7" height="7" fill="#000000"/><rect x="66" y="90" width="7" height="7" fill="#000000"/><rect x="74" y="90" width="7" height="7" fill="#000000"/><rect x="82" y="90" width="7" height="7" fill="#040404"/><rect x="90" y="90" width="7" height="7" fill="#090808"/><rect x="98" y="90" width="7" height="7" fill="#0e0d0d"/><rect x="106" y="90" width="7" height="7" fill="#121111"/><rect x="114" y="90" width="8" height="7" fill="#171515"/><rect x="123" y="90" width="7" height="7" fill="#1c1a1a"/><rect x="131" y="90" width="7" height="7" fill="#201e1e"/><rect x="139" y="90" width="7" height="7" fill="#252323"/><rect x="147" y="90" width="7" height="7" fill="#2a2727"/><rect x="1" y="98" width="7" height="8" fill="#000000"/><rect x="9" y="98" width="7" height="8" fill="#000000"/><rect x="17" y="98" width="7" height="8" fill="#000000"/><rect x="25" y="98" width="7" height="8" fill="#000000"/><rect x="33" y="98" width="8" height="8" fill="#000000"/><rect x="42" y="98" width="7" height="8" fill="#000000"/><rect x="50" y="98" width="7" height="8" fill="#000000"/><rect x="58" y="98" width="7" height="8" fill="#000000"/><rect x="66" y="98" width="7" height="8" fill="#000000"/><rect x="74" y="98" width="7" height="8" fill="#000000"/><rect x="82" y="98" width="7" height="8" fill="#040404"/><rect x="90" y="98" width="7" height="8" fill="#090808"/><rect x="98" y="98" width="7" height="8" fill="#0e0d0d"/><rect x="106" y="98" width="7" height="8" fill="#121111"/><rect x="114" y="98" width="8" height="8" fill="#171515"/><rect x="123" y="98" width="7" height="8" fill="#1c1a1a"/><rect x="131" y="98" width="7" height="8" fill="#201e1e"/><rect x="139" y="98" width="7" height="8" fill="#252222"/><rect x="147" y="98" width="7" height="8" fill="#2a2727"/><rect x="1" y="107" width="7" height="7" fill="#000000"/><rect x="9" y="107" width="7" height="7" fill="#000000"/><rect x="17" y="107" width="7" height="7" fill="#000000"/><rect x="25" y="107" width="7" height="7" fill="#000000"/><rect x="33" y="107" width="8" height="7" fill="#000000"/><rect x="42" y="107" width="7" height="7" fill="#000000"/><rect x="50" y="107" width="7" height="7" fill="#000000"/><rect x="58" y="107" width="7" height="7" fill="#000000"/><rect x="66" y="107" width="7" height="7" fill="#000000"/><rect x="74" y="107" width="7" height="7" fill="#000000"/><rect x="82" y="107" width="7" height="7" fill="#040404"/><rect x="90" y="107" width="7" height="7" fill="#090808"/><rect x="98" y="107" width="7" height="7" fill="#0e0d0d"/><rect x="106" y="107" width="7" height="7" fill="#121111"/><rect x="114" y="107" width="8" height="7" fill="#171515"/><rect x="123" y="107" width="7" height="7" fill="#1c1a1a"/><rect x="131" y="107" width="7" height="7" fill="#201e1e"/><rect x="139" y="107" width="7" height="7" fill="#252222"/><rect x="147" y="107" width="7" height="7" fill="#2a2727"/><rect x="1" y="115" width="7" height="7" fill="#000000"/><rect x="9" y="115" width="7" height="7" fill="#000000"/><rect x="17" y="115" width="7" height="7" fill="#000000"/><rect x="25" y="115" width="7" height="7" fill="#000000"/><rect x="33" y="115" width="8" height="7" fill="#000000"/><rect x="42" y="115" width="7" height="7" fill="#000000"/><rect x="50" y="115" width="7" height="7" fill="#000000"/><rect x="58" y="115" width="7" height="7" fill="#000000"/><rect x="66" y="115" width="7" height="7" fill="#000000"/><rect x="74" y="115" width="7" height="7" fill="#000000"/><rect x="82" y="115" width="7" height="7" fill="#040404"/><rect x="90" y="115" width="7" height="7" fill="#090808"/><rect x="98" y="115" width="7" height="7" fill="#0e0c0c"/><rect x="106" y="115" width="7" height="7" fill="#121111"/><rect x="114" y="115" width="8" height="7" fill="#171515"/><rect x="123" y="115" width="7" height="7" fill="#1c1919"/><rect x="131" y="115" width="7" height="7" fill="#201e1e"/><rect x="139" y="115" width="7" height="7" fill="#252222"/><rect x="147" y="115" width="7" height="7" fill="#2a2626"/><rect x="1" y="123" width="7" height="7" fill="#000000"/><rect x="9" y="123" width="7" height="7" fill="#000000"/><rect x="17" y="123" width="7" height="7" fill="#000000"/><rect x="25" y="123" width="7" height="7" fill="#000000"/><rect x="33" y="123" width="8" height="7" fill="#000000"/><rect x="42" y="123" width="7" height="7" fill="#000000"/><rect x="50" y="123" width="7" height="7" fill="#000000"/><rect x="58" y="123" width="7" height="7" fill="#000000"/><rect x="66" y="123" width="7" height="7" fill="#000000"/><rect x="74" y="123" width="7" height="7" fill="#000000"/><rect x="82" y="123" width="7" height="7" fill="#040404"/><rect x="90" y="123" width="7" height="7" fill="#090808"/><rect x="98" y="123" width="7" height="7" fill="#0e0c0c"/><rect x="106" y="123" width="7" height="7" fill="#121111"/><rect x="114" y="123" width="8" height="7" fill="#171515"/><rect x="123" y="123" width="7" height="7" fill="#1c1919"/><rect x="131" y="123" width="7" height="7" fill="#201e1e"/><rect x="139" y="123" width="7" height="7" fill="#252222"/><rect x="147" y="123" width="7" height="7" fill="#2a2626"/><rect x="1" y="131" width="7" height="7" fill="#000000"/><rect x="9" y="131" width="7" height="7" fill="#000000"/><rect x="17" y="131" width="7" height="7" fill="#000000"/><rect x="25" y="131" width="7" height="7" fill="#000000"/><rect x="33" y="131" width="8" height="7" fill="#000000"/><rect x="42" y="131" width="7" height="7" fill="#000000"/><rect x="50" y="131" width="7" height="7" fill="#000000"/><rect x="58" y="131" width="7" height="7" fill="#000000"/><rect x="66" y="131" width="7" height="7" fill="#000000"/><rect x="74" y="131" width="7" height="7" fill="#000000"/><rect x="82" y="131" width="7" height="7" fill="#040404"/><rect x="90" y="131" width="7" height="7" fill="#090808"/><rect x="98" y="131" width="7" height="7" fill="#0e0c0c"/><rect x="106" y="131" width="7" height="7" fill="#121111"/><rect x="114" y="131" width="8" height="7" fill="#171515"/><rect x="123" y="131" width="7" height="7" fill="#1c1919"/><rect x="131" y="131" width="7" height="7" fill="#201d1d"/><rect x="139" y="131" width="7" height="7" fill="#252222"/><rect x="147" y="131" width="7" height="7" fill="#2a2626"/><rect x="1" y="139" width="7" height="7" fill="#000000"/><rect x="9" y="139" width="7" height="7" fill="#000000"/><rect x="17" y="139" width="7" height="7" fill="#000000"/><rect x="25" y="139" width="7" height="7" fill="#000000"/><rect x="33" y="139" width="8" height="7" fill="#000000"/><rect x="42" y="139" width="7" height="7" fill="#000000"/><rect x="50" y="139" width="7" height="7" fill="#000000"/><rect x="58" y="139" width="7" height="7" fill="#000000"/><rect x="66" y="139" width="7" height="7" fill="#000000"/><rect x="74" y="139" width="7" height="7" fill="#000000"/><rect x="82" y="139" width="7" height="7" fill="#040404"/><rect x="90" y="139" width="7" height="7" fill="#090808"/><rect x="98" y="139" width="7" height="7" fill="#0e0c0c"/><rect x="106" y="139" width="7" height="7" fill="#121010"/><rect x="114" y="139" width="8" height="7" fill="#171515"/><rect x="123" y="139" width="7" height="7" fill="#1c1919"/><rect x="131" y="139" width="7" height="7" fill="#201d1d"/><rect x="139" y="139" width="7" height="7" fill="#252121"/><rect x="147" y="139" width="7" height="7" fill="#2a2626"/><rect x="1" y="147" width="7" height="7" fill="#000000"/><rect x="9" y="147" width="7" height="7" fill="#000000"/><rect x="17" y="147" width="7" height="7" fill="#000000"/><rect x="25" y="147" width="7" height="7" fill="#000000"/><rect x="33" y="147" width="8" height="7" fill="#000000"/><rect x="42" y="147" width="7" height="7" fill="#000000"/><rect x="50" y="147" width="7" height="7" fill="#000000"/><rect x="58" y="147" width="7" height="7" fill="#000000"/><rect x="66" y="147" width="7" height="7" fill="#000000"/><rect x="74" y="147" width="7" height="7" fill="#000000"/><rect x="82" y="147" width="7" height="7" fill="#040404"/><rect x="90" y="147" width="7" height="7" fill="#090808"/><rect x="98" y="147" width="7" height="7" fill="#0e0c0c"/><rect x="106" y="147" width="7" height="7" fill="#121010"/><rect x="114" y="147" width="8" height="7" fill="#171515"/><rect x="123" y="147" width="7" height="7" fill="#1c1919"/><rect x="131" y="147" width="7" height="7" fill="#201d1d"/><rect x="139" y="147" width="7" height="7" fill="#252121"/><rect x="147" y="147" width="7" height="7" fill="#2a2626"/><rect x="1" y="155" width="7" height="7" fill="#000000"/><rect x="9" y="155" width="7" height="7" fill="#000000"/><rect x="17" y="155" width="7" height="7" fill="#000000"/><rect x="25" y="155" width="7" height="7" fill="#000000"/><rect x="33" y="155" width="8" height="7" fill="#000000"/><rect x="42" y="155" width="7" height="7" fill="#000000"/><rect x="50" y="155" width="7" height="7" fill="#000000"/><rect x="58" y="155" width="7" height="7" fill="#000000"/><rect x="66" y="155" width="7" height="7" fill="#000000"/><rect x="74" y="155" width="7" height="7" fill="#000000"/><rect x="82" y="155" width="7" height="7" fill="#040404"/><rect x="90" y="155" width="7" height="7" fill="#090808"/><rect x="98" y="155" width="7" height="7" fill="#0e0c0c"/><rect x="106" y="155" width="7" height="7" fill="#121010"/><rect x="114" y="155" width="8" height="7" fill="#171414"/><rect x="123" y="155" width="7" height="7" fill="#1c1919"/><rect x="131" y="155" width="7" height="7" fill="#201d1d"/><rect x="139" y="155" width="7" height="7" fill="#252121"/><rect x="147" y="155" width="7" height="7" fill="#2a2525"/><rect x="1" y="163" width="7" height="8" fill="#000000"/><rect x="9" y="163" width="7" height="8" fill="#000000"/><rect x="17" y="163" width="7" height="8" fill="#000000"/><rect x="25" y="163" width="7" height="8" fill="#000000"/><rect x="33" y="163" width="8" height="8" fill="#000000"/><rect x="42" y="163" width="7" height="8" fill="#000000"/><rect x="50" y="163" width="7" height="8" fill="#000000"/><rect x="58" y="163" width="7" height="8" fill="#000000"/><rect x="66" y="163" width="7" height="8" fill="#000000"/><rect x="74" y="163" width="7" height="8" fill="#000000"/><rect x="82" y="163" width="7" height="8" fill="#040404"/><rect x="90" y="163" width="7" height="8" fill="#090808"/><rect x="98" y="163" width="7" height="8" fill="#0e0c0c"/><rect x="106" y="163" width="7" height="8" fill="#121010"/><rect x="114" y="163" width="8" height="8" fill="#171414"/><rect x="123" y="163" width="7" height="8" fill="#1c1919"/><rect x="131" y="163" width="7" height="8" fill="#201d1d"/><rect x="139" y="163" width="7" height="8" fill="#252121"/><rect x="147" y="163" width="7" height="8" fill="#2a2525"/><rect x="1" y="172" width="7" height="7" fill="#000000"/><rect x="9" y="172" width="7" height="7" fill="#000000"/><rect x="17" y="172" width="7" height="7" fill="#000000"/><rect x="25" y="172" width="7" height="7" fill="#000000"/><rect x="33" y="172" width="8" height="7" fill="#000000"/><rect x="42" y="172" width="7" height="7" fill="#000000"/><rect x="50" y="172" width="7" height="7" fill="#000000"/><rect x="58" y="172" width="7" height="7" fill="#000000"/><rect x="66" y="172" width="7" height="7" fill="#000000"/><rect x="74" y="172" width="7" height="7" fill="#000000"/><rect x="82" y="172" width="7" height="7" fill="#040404"/><rect x="90" y="172" width="7" height="7" fill="#090808"/><rect x="98" y="172" width="7" height="7" fill="#0e0c0c"/><rect x="106" y="172" width="7" height="7" fill="#121010"/><rect x="114" y="172" width="8" height="7" fill="#171414"/><rect x="123" y="172" width="7" height="7" fill="#1c1818"/><rect x="131" y="172" width="7" height="7" fill="#201d1d"/><rect x="139" y="172" width="7" height="7" fill="#252121"/><rect x="147" y="172" width="7" height="7" fill="#2a2525"/><rect x="1" y="180" width="7" height="7" fill="#000000"/><rect x="9" y="180" width="7" height="7" fill="#000000"/><rect x="17" y="180" width="7" height="7" fill="#000000"/><rect x="25" y="180" width="7" height="7" fill="#000000"/><rect x="33" y="180" width="8" height="7" fill="#000000"/><rect x="42" y="180" width="7" height="7" fill="#000000"/><rect x="50" y="180" width="7" height="7" fill="#000000"/><rect x="58" y="180" width="7" height="7" fill="#000000"/><rect x="66" y="180" width="7" height="7" fill="#000000"/><rect x="74" y="180" width="7" height="7" fill="#000000"/><rect x="82" y="180" width="7" height="7" fill="#040404"/><rect x="90" y="180" width="7" height="7" fill="#090808"/><rect x="98" y="180" width="7" height="7" fill="#0e0c0c"/><rect x="106" y="180" width="7" height="7" fill="#121010"/><rect x="114" y="180" width="8" height="7" fill="#171414"/><rect x="123" y="180" width="7" height="7" fill="#1c1818"/><rect x="131" y="180" width="7" height="7" fill="#201c1c"/><rect x="139" y="180" width="7" height="7" fill="#252020"/><rect x="147" y="180" width="7" height="7" fill="#2a2525"/><rect x="1" y="188" width="7" height="7" fill="#000000"/><rect x="9" y="188" width="7" height="7" fill="#000000"/><rect x="17" y="188" width="7" height="7" fill="#000000"/><rect x="25" y="188" width="7" height="7" fill="#000000"/><rect x="33" y="188" width="8" height="7" fill="#000000"/><rect x="42" y="188" width="7" height="7" fill="#000000"/><rect x="50" y="188" width="7" height="7" fill="#000000"/><rect x="58" y="188" width="7" height="7" fill="#000000"/><rect x="66" y="188" width="7" height="7" fill="#000000"/><rect x="74" y="188" width="7" height="7" fill="#000000"/><rect x="82" y="188" width="7" height="7" fill="#040404"/><rect x="90" y="188" width="7" height="7" fill="#090808"/><rect x="98" y="188" width="7" height="7" fill="#0e0c0c"/><rect x="106" y="188" width="7" height="7" fill="#121010"/><rect x="114" y="188" width="8" height="7" fill="#171414"/><rect x="123" y="188" width="7" height="7" fill="#1c1818"/><rect x="131" y="188" width="7" height="7" fill="#201c1c"/><rect x="139" y="188" width="7" height="7" fill="#252020"/><rect x="147" y="188" width="7" height="7" fill="#2a2424"/><rect x="1" y="196" width="7" height="7" fill="#000000"/><rect x="9" y="196" width="7" height="7" fill="#000000"/><rect x="17" y="196" width="7" height="7" fill="#000000"/><rect x="25" y="196" width="7" height="7" fill="#000000"/><rect x="33" y="196" width="8" height="7" fill="#000000"/><rect x="42" y="196" width="7" height="7" fill="#000000"/><rect x="50" y="196" width="7" height="7" fill="#000000"/><rect x="58" y="196" width="7" height="7" fill="#000000"/><rect x="66" y="196" width="7" height="7" fill="#000000"/><rect x="74" y="196" width="7" height="7" fill="#000000"/><rect x="82" y="196" width="7" height="7" fill="#040404"/><rect x="90" y="196" width="7" height="7" fill="#090808"/><rect x="98" y="196" width="7" height="7" fill="#0e0c0c"/><rect x="106" y="196" width="7" height="7" fill="#121010"/><rect x="114" y="196" width="8" height="7" fill="#171414"/><rect x="123" y="196" width="7" height="7" fill="#1c1818"/><rect x="131" y="196" width="7" height="7" fill="#201c1c"/><rect x="139" y="196" width="7" height="7" fill="#252020"/><rect x="147" y="196" width="7" height="7" fill="#2a2424"/><rect x="1" y="204" width="7" height="7" fill="#000000"/><rect x="9" y="204" width="7" height="7" fill="#000000"/><rect x="17" y="204" width="7" height="7" fill="#000000"/><rect x="25" y="204" width="7" height="7" fill="#000000"/><rect x="33" y="204" width="8" height="7" fill="#000000"/><rect x="42" y="204" width="7" height="7" fill="#000000"/><rect x="50" y="204" width="7" height="7" fill="#000000"/><rect x="58" y="204" width="7" height="7" fill="#000000"/><rect x="66" y="204" width="7" height="7" fill="#000000"/><rect x="74" y="204" width="7" height="7" fill="#000000"/><rect x="82" y="204" width="7" height="7" fill="#040404"/><rect x="90" y="204" width="7" height="7" fill="#090808"/><rect x="98" y="204" width="7" height="7" fill="#0e0c0c"/><rect x="106" y="204" width="7" height="7" fill="#121010"/><rect x="114" y="204" width="8" height="7" fill="#171414"/><rect x="123" y="204" width="7" height="7" fill="#1c1818"/><rect x="131" y="204" width="7" height="7" fill="#201c1c"/><rect x="139" y="204" width="7" height="7" fill="#252020"/><rect x="147" y="204" width="7" height="7" fill="#2a2424"/><rect x="1" y="212" width="7" height="7" fill="#000000"/><rect x="9" y="212" width="7" height="7" fill="#000000"/><rect x="17" y="212" width="7" height="7" fill="#000000"/><rect x="25" y="212" width="7" height="7" fill="#000000"/><rect x="33" y="212" width="8" height="7" fill="#000000"/><rect x="42" y="212" width="7" height="7" fill="#000000"/><rect x="50" y="212" width="7" height="7" fill="#000000"/><rect x="58" y="212" width="7" height="7" fill="#000000"/><rect x="66" y="212" width="7" height="7" fill="#000000"/><rect x="74" y="212" width="7" height="7" fill="#000000"/><rect x="82" y="212" width="7" height="7" fill="#040404"/><rect x="90" y="212" width="7" height="7" fill="#090808"/><rect x="98" y="212" width="7" height="7" fill="#0e0c0c"/><rect x="106" y="212" width="7" height="7" fill="#121010"/><rect x="114" y="212" width="8" height="7" fill="#171414"/><rect x="123" y="212" width="7" height="7" fill="#1c1818"/><rect x="131" y="212" width="7" height="7" fill="#201c1c"/><rect x="139" y="212" width="7" height="7" fill="#252020"/><rect x="147" y="212" width="7" height="7" fill="#2a2424"/><rect x="1" y="220" width="7" height="7" fill="#000000"/><rect x="9" y="220" width="7" height="7" fill="#000000"/><rect x="17" y="220" width="7" height="7" fill="#000000"/><rect x="25" y="220" width="7" height="7" fill="#000000"/><rect x="33" y="220" width="8" height="7" fill="#000000"/><rect x="42" y="220" width="7" height="7" fill="#000000"/><rect x="50" y="220" width="7" height="7" fill="#000000"/><rect x="58" y="220" width="7" height="7" fill="#000000"/><rect x="66" y="220" width="7" height="7" fill="#000000"/><rect x="74" y="220" width="7" height="7" fill="#000000"/><rect x="82" y="220" width="7" height="7" fill="#040303"/><rect x="90" y="220" width="7" height="7" fill="#090707"/><rect x="98" y="220" width="7" height="7" fill="#0e0b0b"/><rect x="106" y="220" width="7" height="7" fill="#120f0f"/><rect x="114" y="220" width="8" height="7" fill="#171313"/><rect x="123" y="220" width="7" height="7" fill="#1c1717"/><rect x="131" y="220" width="7" height="7" fill="#201b1b"/><rect x="139" y="220" width="7" height="7" fill="#251f1f"/><rect x="147" y="220" width="7" height="7" fill="#2a2323"/><rect x="1" y="228" width="7" height="8" fill="#000000"/><rect x="9" y="228" width="7" height="8" fill="#000000"/><rect x="17" y="228" width="7" height="8" fill="#000000"/><rect x="25" y="228" width="7" height="8" fill="#000000"/><rect x="33" y="228" width="8" height="8" fill="#000000"/><rect x="42" y="228" width="7" height="8" fill="#000000"/><rect x="50" y="228" width="7" height="8" fill="#000000"/><rect x="58" y="228" width="7" height="8" fill="#000000"/><rect x="66" y="228" width="7" height="8" fill="#000000"/><rect x="74" y="228" width="7" height="8" fill="#000000"/><rect x="82" y="228" width="7" height="8" fill="#040303"/><rect x="90" y="228" width="7" height="8" fill="#090707"/><rect x="98" y="228" width="7" height="8" fill="#0e0b0b"/><rect x="106" y="228" width="7" height="8" fill="#120f0f"/><rect x="114" y="228" width="8" height="8" fill="#171313"/><rect x="123" y="228" width="7" height="8" fill="#1c1717"/><rect x="131" y="228" width="7" height="8" fill="#201b1b"/><rect x="139" y="228" width="7" height="8" fill="#251f1f"/><rect x="147" y="228" width="7" height="8" fill="#2a2323"/><rect x="1" y="237" width="7" height="7" fill="#000000"/><rect x="9" y="237" width="7" height="7" fill="#000000"/><rect x="17" y="237" width="7" height="7" fill="#000000"/><rect x="25" y="237" width="7" height="7" fill="#000000"/><rect x="33" y="237" width="8" height="7" fill="#000000"/><rect x="42" y="237" width="7" height="7" fill="#000000"/><rect x="50" y="237" width="7" height="7" fill="#000000"/><rect x="58" y="237" width="7" height="7" fill="#000000"/><rect x="66" y="237" width="7" height="7" fill="#000000"/><rect x="74" y="237" width="7" height="7" fill="#000000"/><rect x="82" y="237" width="7" height="7" fill="#040303"/><rect x="90" y="237" width="7" height="7" fill="#090707"/><rect x="98" y="237" width="7" height="7" fill="#0e0b0b"/><rect x="106" y="237" width="7" height="7" fill="#120f0f"/><rect x="114" y="237" width="8" height="7" fill="#171313"/><rect x="123" y="237" width="7" height="7" fill="#1c1717"/><rect x="131" y="237" width="7" height="7" fill="#201b1b"/><rect x="139" y="237" width="7" height="7" fill="#251f1f"/><rect x="147" y="237" width="7" height="7" fill="#2a2323"/><rect x="1" y="245" width="7" height="7" fill="#000000"/><rect x="9" y="245" width="7" height="7" fill="#000000"/><rect x="17" y="245" width="7" height="7" fill="#000000"/><rect x="25" y="245" width="7" height="7" fill="#000000"/><rect x="33" y="245" width="8" height="7" fill="#000000"/><rect x="42" y="245" width="7" height="7" fill="#000000"/><rect x="50" y="245" width="7" height="7" fill="#000000"/><rect x="58" y="245" width="7" height="7" fill="#000000"/><rect x="66" y="245" width="7" height="7" fill="#000000"/><rect x="74" y="245" width="7" height="7" fill="#000000"/><rect x="82" y="245" width="7" height="7" fill="#040303"/><rect x="90" y="245" width="7" height="7" fill="#090707"/><rect x="98" y="245" width="7" height="7" fill="#0e0b0b"/><rect x="106" y="245" width="7" height="7" fill="#120f0f"/><rect x="114" y="245" width="8" height="7" fill="#171313"/><rect x="123" y="245" width="7" height="7" fill="#1c1717"/><rect x="131" y="245" width="7" height="7" fill="#201b1b"/><rect x="139" y="245" width="7" height="7" fill="#251f1f"/><rect x="147" y="245" width="7" height="7" fill="#2a2323"/><rect x="1" y="253" width="7" height="7" fill="#000000"/><rect x="9" y="253" width="7" height="7" fill="#000000"/><rect x="17" y="253" width="7" height="7" fill="#000000"/><rect x="25" y="253" width="7" height="7" fill="#000000"/><rect x="33" y="253" width="8" height="7" fill="#000000"/><rect x="42" y="253" width="7" height="7" fill="#000000"/><rect x="50" y="253" width="7" height="7" fill="#000000"/><rect x="58" y="253" width="7" height="7" fill="#000000"/><rect x="66" y="253" width="7" height="7" fill="#000000"/><rect x="74" y="253" width="7" height="7" fill="#000000"/><rect x="82" y="253" width="7" height="7" fill="#040303"/><rect x="90" y="253" width="7" height="7" fill="#090707"/><rect x="98" y="253" width="7" height="7" fill="#0e0b0b"/><rect x="106" y="253" width="7" height="7" fill="#120f0f"/><rect x="114" y="253" width="8" height="7" fill="#171313"/><rect x="123" y="253" width="7" height="7" fill="#1c1717"/><rect x="131" y="253" width="7" height="7" fill="#201b1b"/><rect x="139" y="253" width="7" height="7" fill="#251f1f"/><rect x="147" y="253" width="7" height="7" fill="#2a2323"/><rect x="1" y="261" width="7" height="7" fill="#000000"/><rect x="9" y="261" width="7" height="7" fill="#000000"/><rect x="17" y="261" width="7" height="7" fill="#000000"/><rect x="25" y="261" width="7" height="7" fill="#000000"/><rect x="33" y="261" width="8" height="7" fill="#000000"/><rect x="42" y="261" width="7" height="7" fill="#000000"/><rect x="50" y="261" width="7" height="7" fill="#000000"/><rect x="58" y="261" width="7" height="7" fill="#000000"/><rect x="66" y="261" width="7" height="7" fill="#000000"/><rect x="74" y="261" width="7" height="7" fill="#000000"/><rect x="82" y="261" width="7" height="7" fill="#040303"/><rect x="90" y="261" width="7" height="7" fill="#090707"/><rect x="98" y="261" width="7" height="7" fill="#0e0b0b"/><rect x="106" y="261" width="7" height="7" fill="#120f0f"/><rect x="114" y="261" width="8" height="7" fill="#171313"/><rect x="123" y="261" width="7" height="7" fill="#1c1717"/><rect x="131" y="261" width="7" height="7" fill="#201b1b"/><rect x="139" y="261" width="7" height="7" fill="#251e1e"/><rect x="147" y="261" width="7" height="7" fill="#2a2222"/><rect x="1" y="269" width="7" height="7" fill="#000000"/><rect x="9" y="269" width="7" height="7" fill="#000000"/><rect x="17" y="269" width="7" height="7" fill="#000000"/><rect x="25" y="269" width="7" height="7" fill="#000000"/><rect x="33" y="269" width="8" height="7" fill="#000000"/><rect x="42" y="269" width="7" height="7" fill="#000000"/><rect x="50" y="269" width="7" height="7" fill="#000000"/><rect x="58" y="269" width="7" height="7" fill="#000000"/><rect x="66" y="269" width="7" height="7" fill="#000000"/><rect x="74" y="269" width="7" height="7" fill="#000000"/><rect x="82" y="269" width="7" height="7" fill="#040303"/><rect x="90" y="269" width="7" height="7" fill="#090707"/><rect x="98" y="269" width="7" height="7" fill="#0e0b0b"/><rect x="106" y="269" width="7" height="7" fill="#120f0f"/><rect x="114" y="269" width="8" height="7" fill="#171313"/><rect x="123" y="269" width="7" height="7" fill="#1c1717"/><rect x="131" y="269" width="7" height="7" fill="#201a1a"/><rect x="139" y="269" width="7" height="7" fill="#251e1e"/><rect x="147" y="269" width="7" height="7" fill="#2a2222"/><rect x="1" y="277" width="7" height="7" fill="#000000"/><rect x="9" y="277" width="7" height="7" fill="#000000"/><rect x="17" y="277" width="7" height="7" fill="#000000"/><rect x="25" y="277" width="7" height="7" fill="#000000"/><rect x="33" y="277" width="8" height="7" fill="#000000"/><rect x="42" y="277" width="7" height="7" fill="#000000"/><rect x="50" y="277" width="7" height="7" fill="#000000"/><rect x="58" y="277" width="7" height="7" fill="#000000"/><rect x="66" y="277" width="7" height="7" fill="#000000"/><rect x="74" y="277" width="7" height="7" fill="#000000"/><rect x="82" y="277" width="7" height="7" fill="#040303"/><rect x="90" y="277" width="7" height="7" fill="#090707"/><rect x="98" y="277" width="7" height="7" fill="#0e0b0b"/><rect x="106" y="277" width="7" height="7" fill="#120f0f"/><rect x="114" y="277" width="8" height="7" fill="#171313"/><rect x="123" y="277" width="7" height="7" fill="#1c1616"/><rect x="131" y="277" width="7" height="7" fill="#201a1a"/><rect x="139" y="277" width="7" height="7" fill="#251e1e"/><rect x="147" y="277" width="7" height="7" fill="#2a2222"/><rect x="1" y="285" width="7" height="7" fill="#000000"/><rect x="9" y="285" width="7" height="7" fill="#000000"/><rect x="17" y="285" width="7" height="7" fill="#000000"/><rect x="25" y="285" width="7" height="7" fill="#000000"/><rect x="33" y="285" width="8" height="7" fill="#000000"/><rect x="42" y="285" width="7" height="7" fill="#000000"/><rect x="50" y="285" width="7" height="7" fill="#000000"/><rect x="58" y="285" width="7" height="7" fill="#000000"/><rect x="66" y="285" width="7" height="7" fill="#000000"/><rect x="74" y="285" width="7" height="7" fill="#000000"/><rect x="82" y="285" width="7" height="7" fill="#040303"/><rect x="90" y="285" width="7" height="7" fill="#090707"/><rect x="98" y="285" width="7" height="7" fill="#0e0b0b"/><rect x="106" y="285" width="7" height="7" fill="#120f0f"/><rect x="114" y="285" width="8" height="7" fill="#171212"/><rect x="123" y="285" width="7" height="7" fill="#1c1616"/><rect x="131" y="285" width="7" height="7" fill="#201a1a"/><rect x="139" y="285" width="7" height="7" fill="#251e1e"/><rect x="147" y="285" width="7" height="7" fill="#2a2222"/><rect x="1" y="293" width="7" height="8" fill="#000000"/><rect x="9" y="293" width="7" height="8" fill="#000000"/><rect x="17" y="293" width="7" height="8" fill="#000000"/><rect x="25" y="293" width="7" height="8" fill="#000000"/><rect x="33" y="293" width="8" height="8" fill="#000000"/><rect x="42" y="293" width="7" height="8" fill="#000000"/><rect x="50" y="293" width="7" height="8" fill="#000000"/><rect x="58" y="293" width="7" height="8" fill="#000000"/><rect x="66" y="293" width="7" height="8" fill="#000000"/><rect x="74" y="293" width="7" height="8" fill="#000000"/><rect x="82" y="293" width="7" height="8" fill="#040303"/><rect x="90" y="293" width="7" height="8" fill="#090707"/><rect x="98" y="293" width="7" height="8" fill="#0e0b0b"/><rect x="106" y="293" width="7" height="8" fill="#120f0f"/><rect x="114" y="293" width="8" height="8" fill="#171212"/><rect x="123" y="293" width="7" height="8" fill="#1c1616"/><rect x="131" y="293" width="7" height="8" fill="#201a1a"/><rect x="139" y="293" width="7" height="8" fill="#251e1e"/><rect x="147" y="293" width="7" height="8" fill="#2a2121"/><rect x="1" y="302" width="7" height="7" fill="#000000"/><rect x="9" y="302" width="7" height="7" fill="#000000"/><rect x="17" y="302" width="7" height="7" fill="#000000"/><rect x="25" y="302" width="7" height="7" fill="#000000"/><rect x="33" y="302" width="8" height="7" fill="#000000"/><rect x="42" y="302" width="7" height="7" fill="#000000"/><rect x="50" y="302" width="7" height="7" fill="#000000"/><rect x="58" y="302" width="7" height="7" fill="#000000"/><rect x="66" y="302" width="7" height="7" fill="#000000"/><rect x="74" y="302" width="7" height="7" fill="#000000"/><rect x="82" y="302" width="7" height="7" fill="#040303"/><rect x="90" y="302" width="7" height="7" fill="#090707"/><rect x="98" y="302" width="7" height="7" fill="#0e0b0b"/><rect x="106" y="302" width="7" height="7" fill="#120e0e"/><rect x="114" y="302" width="8" height="7" fill="#171212"/><rect x="123" y="302" width="7" height="7" fill="#1c1616"/><rect x="131" y="302" width="7" height="7" fill="#201a1a"/><rect x="139" y="302" width="7" height="7" fill="#251d1d"/><rect x="147" y="302" width="7" height="7" fill="#2a2121"/><rect x="1" y="310" width="7" height="7" fill="#000000"/><rect x="9" y="310" width="7" height="7" fill="#000000"/><rect x="17" y="310" width="7" height="7" fill="#000000"/><rect x="25" y="310" width="7" height="7" fill="#000000"/><rect x="33" y="310" width="8" height="7" fill="#000000"/><rect x="42" y="310" width="7" height="7" fill="#000000"/><rect x="50" y="310" width="7" height="7" fill="#000000"/><rect x="58" y="310" width="7" height="7" fill="#000000"/><rect x="66" y="310" width="7" height="7" fill="#000000"/><rect x="74" y="310" width="7" height="7" fill="#000000"/><rect x="82" y="310" width="7" height="7" fill="#040303"/><rect x="90" y="310" width="7" height="7" fill="#090707"/><rect x="98" y="310" width="7" height="7" fill="#0e0b0b"/><rect x="106" y="310" width="7" height="7" fill="#120e0e"/><rect x="114" y="310" width="8" height="7" fill="#171212"/><rect x="123" y="310" width="7" height="7" fill="#1c1616"/><rect x="131" y="310" width="7" height="7" fill="#201a1a"/><rect x="139" y="310" width="7" height="7" fill="#251d1d"/><rect x="147" y="310" width="7" height="7" fill="#2a2121"/><rect x="1" y="318" width="7" height="7" fill="#000000"/><rect x="9" y="318" width="7" height="7" fill="#000000"/><rect x="17" y="318" width="7" height="7" fill="#000000"/><rect x="25" y="318" width="7" height="7" fill="#000000"/><rect x="33" y="318" width="8" height="7" fill="#000000"/><rect x="42" y="318" width="7" height="7" fill="#000000"/><rect x="50" y="318" width="7" height="7" fill="#000000"/><rect x="58" y="318" width="7" height="7" fill="#000000"/><rect x="66" y="318" width="7" height="7" fill="#000000"/><rect x="74" y="318" width="7" height="7" fill="#000000"/><rect x="82" y="318" width="7" height="7" fill="#040303"/><rect x="90" y="318" width="7" height="7" fill="#090707"/><rect x="98" y="318" width="7" height="7" fill="#0e0b0b"/><rect x="106" y="318" width="7" height="7" fill="#120e0e"/><rect x="114" y="318" width="8" height="7" fill="#171212"/><rect x="123" y="318" width="7" height="7" fill="#1c1616"/><rect x="131" y="318" width="7" height="7" fill="#201919"/><rect x="139" y="318" width="7" height="7" fill="#251d1d"/><rect x="147" y="318" width="7" height="7" fill="#2a2121"/><rect x="1" y="326" width="7" height="7" fill="#000000"/><rect x="9" y="326" width="7" height="7" fill="#000000"/><rect x="17" y="326" width="7" height="7" fill="#000000"/><rect x="25" y="326" width="7" height="7" fill="#000000"/><rect x="33" y="326" width="8" height="7" fill="#000000"/><rect x="42" y="326" width="7" height="7" fill="#000000"/><rect x="50" y="326" width="7" height="7" fill="#000000"/><rect x="58" y="326" width="7" height="7" fill="#000000"/><rect x="66" y="326" width="7" height="7" fill="#000000"/><rect x="74" y="326" width="7" height="7" fill="#000000"/><rect x="82" y="326" width="7" height="7" fill="#040303"/><rect x="90" y="326" width="7" height="7" fill="#090707"/><rect x="98" y="326" width="7" height="7" fill="#0e0b0b"/><rect x="106" y="326" width="7" height="7" fill="#120e0e"/><rect x="114" y="326" width="8" height="7" fill="#171212"/><rect x="123" y="326" width="7" height="7" fill="#1c1616"/><rect x="131" y="326" width="7" height="7" fill="#201919"/><rect x="139" y="326" width="7" height="7" fill="#251d1d"/><rect x="147" y="326" width="7" height="7" fill="#2a2121"/><rect x="1" y="334" width="7" height="7" fill="#000000"/><rect x="9" y="334" width="7" height="7" fill="#000000"/><rect x="17" y="334" width="7" height="7" fill="#000000"/><rect x="25" y="334" width="7" height="7" fill="#000000"/><rect x="33" y="334" width="8" height="7" fill="#000000"/><rect x="42" y="334" width="7" height="7" fill="#000000"/><rect x="50" y="334" width="7" height="7" fill="#000000"/><rect x="58" y="334" width="7" height="7" fill="#000000"/><rect x="66" y="334" width="7" height="7" fill="#000000"/><rect x="74" y="334" width="7" height="7" fill="#000000"/><rect x="82" y="334" width="7" height="7" fill="#040303"/><rect x="90" y="334" width="7" height="7" fill="#090707"/><rect x="98" y="334" width="7" height="7" fill="#0e0a0a"/><rect x="106" y="334" width="7" height="7" fill="#120e0e"/><rect x="114" y="334" width="8" height="7" fill="#171212"/><rect x="123" y="334" width="7" height="7" fill="#1c1515"/><rect x="131" y="334" width="7" height="7" fill="#201919"/><rect x="139" y="334" width="7" height="7" fill="#251d1d"/><rect x="147" y="334" width="7" height="7" fill="#2a2020"/><rect x="1" y="342" width="7" height="7" fill="#000000"/><rect x="9" y="342" width="7" height="7" fill="#000000"/><rect x="17" y="342" width="7" height="7" fill="#000000"/><rect x="25" y="342" width="7" height="7" fill="#000000"/><rect x="33" y="342" width="8" height="7" fill="#000000"/><rect x="42" y="342" width="7" height="7" fill="#000000"/><rect x="50" y="342" width="7" height="7" fill="#000000"/><rect x="58" y="342" width="7" height="7" fill="#000000"/><rect x="66" y="342" width="7" height="7" fill="#000000"/><rect x="74" y="342" width="7" height="7" fill="#000000"/><rect x="82" y="342" width="7" height="7" fill="#040303"/><rect x="90" y="342" width="7" height="7" fill="#090707"/><rect x="98" y="342" width="7" height="7" fill="#0e0a0a"/><rect x="106" y="342" width="7" height="7" fill="#120e0e"/><rect x="114" y="342" width="8" height="7" fill="#171212"/><rect x="123" y="342" width="7" height="7" fill="#1c1515"/><rect x="131" y="342" width="7" height="7" fill="#201919"/><rect x="139" y="342" width="7" height="7" fill="#251c1c"/><rect x="147" y="342" width="7" height="7" fill="#2a2020"/><rect x="1" y="350" width="7" height="7" fill="#000000"/><rect x="9" y="350" width="7" height="7" fill="#000000"/><rect x="17" y="350" width="7" height="7" fill="#000000"/><rect x="25" y="350" width="7" height="7" fill="#000000"/><rect x="33" y="350" width="8" height="7" fill="#000000"/><rect x="42" y="350" width="7" height="7" fill="#000000"/><rect x="50" y="350" width="7" height="7" fill="#000000"/><rect x="58" y="350" width="7" height="7" fill="#000000"/><rect x="66" y="350" width="7" height="7" fill="#000000"/><rect x="74" y="350" width="7" height="7" fill="#000000"/><rect x="82" y="350" width="7" height="7" fill="#040303"/><rect x="90" y="350" width="7" height="7" fill="#090707"/><rect x="98" y="350" width="7" height="7" fill="#0e0a0a"/><rect x="106" y="350" width="7" height="7" fill="#120e0e"/><rect x="114" y="350" width="8" height="7" fill="#171111"/><rect x="123" y="350" width="7" height="7" fill="#1c1515"/><rect x="131" y="350" width="7" height="7" fill="#201919"/><rect x="139" y="350" width="7" height="7" fill="#251c1c"/><rect x="147" y="350" width="7" height="7" fill="#2a2020"/><rect x="1" y="358" width="7" height="8" fill="#000000"/><rect x="9" y="358" width="7" height="8" fill="#000000"/><rect x="17" y="358" width="7" height="8" fill="#000000"/><rect x="25" y="358" width="7" height="8" fill="#000000"/><rect x="33" y="358" width="8" height="8" fill="#000000"/><rect x="42" y="358" width="7" height="8" fill="#000000"/><rect x="50" y="358" width="7" height="8" fill="#000000"/><rect x="58" y="358" width="7" height="8" fill="#000000"/><rect x="66" y="358" width="7" height="8" fill="#000000"/><rect x="74" y="358" width="7" height="8" fill="#000000"/><rect x="82" y="358" width="7" height="8" fill="#040303"/><rect x="90" y="358" width="7" height="8" fill="#090707"/><rect x="98" y="358" width="7" height="8" fill="#0e0a0a"/><rect x="106" y="358" width="7" height="8" fill="#120e0e"/><rect x="114" y="358" width="8" height="8" fill="#171111"/><rect x="123" y="358" width="7" height="8" fill="#1c1515"/><rect x="131" y="358" width="7" height="8" fill="#201919"/><rect x="139" y="358" width="7" height="8" fill="#251c1c"/><rect x="147" y="358" width="7" height="8" fill="#2a2020"/><rect x="1" y="367" width="7" height="7" fill="#000000"/><rect x="9" y="367" width="7" height="7" fill="#000000"/><rect x="17" y="367" width="7" height="7" fill="#000000"/><rect x="25" y="367" width="7" height="7" fill="#000000"/><rect x="33" y="367" width="8" height="7" fill="#000000"/><rect x="42" y="367" width="7" height="7" fill="#000000"/><rect x="50" y="367" width="7" height="7" fill="#000000"/><rect x="58" y="367" width="7" height="7" fill="#000000"/><rect x="66" y="367" width="7" height="7" fill="#000000"/><rect x="74" y="367" width="7" height="7" fill="#000000"/><rect x="82" y="367" width="7" height="7" fill="#040303"/><rect x="90" y="367" width="7" height="7" fill="#090707"/><rect x="98" y="367" width="7" height="7" fill="#0e0a0a"/><rect x="106" y="367" width="7" height="7" fill="#120e0e"/><rect x="114" y="367" width="8" height="7" fill="#171111"/><rect x="123" y="367" width="7" height="7" fill="#1c1515"/><rect x="131" y="367" width="7" height="7" fill="#201818"/><rect x="139" y="367" width="7" height="7" fill="#251c1c"/><rect x="147" y="367" width="7" height="7" fill="#2a1f1f"/><rect x="1" y="375" width="7" height="7" fill="#000000"/><rect x="9" y="375" width="7" height="7" fill="#000000"/><rect x="17" y="375" width="7" height="7" fill="#000000"/><rect x="25" y="375" width="7" height="7" fill="#000000"/><rect x="33" y="375" width="8" height="7" fill="#000000"/><rect x="42" y="375" width="7" height="7" fill="#000000"/><rect x="50" y="375" width="7" height="7" fill="#000000"/><rect x="58" y="375" width="7" height="7" fill="#000000"/><rect x="66" y="375" width="7" height="7" fill="#000000"/><rect x="74" y="375" width="7" height="7" fill="#000000"/><rect x="82" y="375" width="7" height="7" fill="#040303"/><rect x="90" y="375" width="7" height="7" fill="#090707"/><rect x="98" y="375" width="7" height="7" fill="#0e0a0a"/><rect x="106" y="375" width="7" height="7" fill="#120e0e"/><rect x="114" y="375" width="8" height="7" fill="#171111"/><rect x="123" y="375" width="7" height="7" fill="#1c1515"/><rect x="131" y="375" width="7" height="7" fill="#201818"/><rect x="139" y="375" width="7" height="7" fill="#251c1c"/><rect x="147" y="375" width="7" height="7" fill="#2a1f1f"/><rect x="1" y="383" width="7" height="7" fill="#000000"/><rect x="9" y="383" width="7" height="7" fill="#000000"/><rect x="17" y="383" width="7" height="7" fill="#000000"/><rect x="25" y="383" width="7" height="7" fill="#000000"/><rect x="33" y="383" width="8" height="7" fill="#000000"/><rect x="42" y="383" width="7" height="7" fill="#000000"/><rect x="50" y="383" width="7" height="7" fill="#000000"/><rect x="58" y="383" width="7" height="7" fill="#000000"/><rect x="66" y="383" width="7" height="7" fill="#000000"/><rect x="74" y="383" width="7" height="7" fill="#000000"/><rect x="82" y="383" width="7" height="7" fill="#040303"/><rect x="90" y="383" width="7" height="7" fill="#090606"/><rect x="98" y="383" width="7" height="7" fill="#0e0a0a"/><rect x="106" y="383" width="7" height="7" fill="#120d0d"/><rect x="114" y="383" width="8" height="7" fill="#171111"/><rect x="123" y="383" width="7" height="7" fill="#1c1414"/><rect x="131" y="383" width="7" height="7" fill="#201818"/><rect x="139" y="383" width="7" height="7" fill="#251b1b"/><rect x="147" y="383" width="7" height="7" fill="#2a1f1f"/><rect x="1" y="391" width="7" height="7" fill="#000000"/><rect x="9" y="391" width="7" height="7" fill="#000000"/><rect x="17" y="391" width="7" height="7" fill="#000000"/><rect x="25" y="391" width="7" height="7" fill="#000000"/><rect x="33" y="391" width="8" height="7" fill="#000000"/><rect x="42" y="391" width="7" height="7" fill="#000000"/><rect x="50" y="391" width="7" height="7" fill="#000000"/><rect x="58" y="391" width="7" height="7" fill="#000000"/><rect x="66" y="391" width="7" height="7" fill="#000000"/><rect x="74" y="391" width="7" height="7" fill="#000000"/><rect x="82" y="391" width="7" height="7" fill="#040303"/><rect x="90" y="391" width="7" height="7" fill="#090606"/><rect x="98" y="391" width="7" height="7" fill="#0e0a0a"/><rect x="106" y="391" width="7" height="7" fill="#120d0d"/><rect x="114" y="391" width="8" height="7" fill="#171111"/><rect x="123" y="391" width="7" height="7" fill="#1c1414"/><rect x="131" y="391" width="7" height="7" fill="#201818"/><rect x="139" y="391" width="7" height="7" fill="#251b1b"/><rect x="147" y="391" width="7" height="7" fill="#2a1f1f"/><rect x="1" y="399" width="7" height="7" fill="#000000"/><rect x="9" y="399" width="7" height="7" fill="#000000"/><rect x="17" y="399" width="7" height="7" fill="#000000"/><rect x="25" y="399" width="7" height="7" fill="#000000"/><rect x="33" y="399" width="8" height="7" fill="#000000"/><rect x="42" y="399" width="7" height="7" fill="#000000"/><rect x="50" y="399" width="7" height="7" fill="#000000"/><rect x="58" y="399" width="7" height="7" fill="#000000"/><rect x="66" y="399" width="7" height="7" fill="#000000"/><rect x="74" y="399" width="7" height="7" fill="#000000"/><rect x="82" y="399" width="7" height="7" fill="#040303"/><rect x="90" y="399" width="7" height="7" fill="#090606"/><rect x="98" y="399" width="7" height="7" fill="#0e0a0a"/><rect x="106" y="399" width="7" height="7" fill="#120d0d"/><rect x="114" y="399" width="8" height="7" fill="#171111"/><rect x="123" y="399" width="7" height="7" fill="#1c1414"/><rect x="131" y="399" width="7" height="7" fill="#201818"/><rect x="139" y="399" width="7" height="7" fill="#251b1b"/><rect x="147" y="399" width="7" height="7" fill="#2a1f1f"/><rect x="1" y="407" width="7" height="7" fill="#000000"/><rect x="9" y="407" width="7" height="7" fill="#000000"/><rect x="17" y="407" width="7" height="7" fill="#000000"/><rect x="25" y="407" width="7" height="7" fill="#000000"/><rect x="33" y="407" width="8" height="7" fill="#000000"/><rect x="42" y="407" width="7" height="7" fill="#000000"/><rect x="50" y="407" width="7" height="7" fill="#000000"/><rect x="58" y="407" width="7" height="7" fill="#000000"/><rect x="66" y="407" width="7" height="7" fill="#000000"/><rect x="74" y="407" width="7" height="7" fill="#000000"/><rect x="82" y="407" width="7" height="7" fill="#040303"/><rect x="90" y="407" width="7" height="7" fill="#090606"/><rect x="98" y="407" width="7" height="7" fill="#0e0a0a"/><rect x="106" y="407" width="7" height="7" fill="#120d0d"/><rect x="114" y="407" width="8" height="7" fill="#171111"/><rect x="123" y="407" width="7" height="7" fill="#1c1414"/><rect x="131" y="407" width="7" height="7" fill="#201717"/><rect x="139" y="407" width="7" height="7" fill="#251b1b"/><rect x="147" y="407" width="7" height="7" fill="#2a1e1e"/><rect x="1" y="415" width="7" height="7" fill="#000000"/><rect x="9" y="415" width="7" height="7" fill="#000000"/><rect x="17" y="415" width="7" height="7" fill="#000000"/><rect x="25" y="415" width="7" height="7" fill="#000000"/><rect x="33" y="415" width="8" height="7" fill="#000000"/><rect x="42" y="415" width="7" height="7" fill="#000000"/><rect x="50" y="415" width="7" height="7" fill="#000000"/><rect x="58" y="415" width="7" height="7" fill="#000000"/><rect x="66" y="415" width="7" height="7" fill="#000000"/><rect x="74" y="415" width="7" height="7" fill="#000000"/><rect x="82" y="415" width="7" height="7" fill="#040303"/><rect x="90" y="415" width="7" height="7" fill="#090606"/><rect x="98" y="415" width="7" height="7" fill="#0e0a0a"/><rect x="106" y="415" width="7" height="7" fill="#120d0d"/><rect x="114" y="415" width="8" height="7" fill="#171010"/><rect x="123" y="415" width="7" height="7" fill="#1c1414"/><rect x="131" y="415" width="7" height="7" fill="#201717"/><rect x="139" y="415" width="7" height="7" fill="#251b1b"/><rect x="147" y="415" width="7" height="7" fill="#2a1e1e"/><rect x="1" y="423" width="7" height="8" fill="#000000"/><rect x="9" y="423" width="7" height="8" fill="#000000"/><rect x="17" y="423" width="7" height="8" fill="#000000"/><rect x="25" y="423" width="7" height="8" fill="#000000"/><rect x="33" y="423" width="8" height="8" fill="#000000"/><rect x="42" y="423" width="7" height="8" fill="#000000"/><rect x="50" y="423" width="7" height="8" fill="#000000"/><rect x="58" y="423" width="7" height="8" fill="#000000"/><rect x="66" y="423" width="7" height="8" fill="#000000"/><rect x="74" y="423" width="7" height="8" fill="#000000"/><rect x="82" y="423" width="7" height="8" fill="#040303"/><rect x="90" y="423" width="7" height="8" fill="#090606"/><rect x="98" y="423" width="7" height="8" fill="#0e0a0a"/><rect x="106" y="423" width="7" height="8" fill="#120d0d"/><rect x="114" y="423" width="8" height="8" fill="#171010"/><rect x="123" y="423" width="7" height="8" fill="#1c1414"/><rect x="131" y="423" width="7" height="8" fill="#201717"/><rect x="139" y="423" width="7" height="8" fill="#251a1a"/><rect x="147" y="423" width="7" height="8" fill="#2a1e1e"/><rect x="1" y="432" width="7" height="7" fill="#000000"/><rect x="9" y="432" width="7" height="7" fill="#000000"/><rect x="17" y="432" width="7" height="7" fill="#000000"/><rect x="25" y="432" width="7" height="7" fill="#000000"/><rect x="33" y="432" width="8" height="7" fill="#000000"/><rect x="42" y="432" width="7" height="7" fill="#000000"/><rect x="50" y="432" width="7" height="7" fill="#000000"/><rect x="58" y="432" width="7" height="7" fill="#000000"/><rect x="66" y="432" width="7" height="7" fill="#000000"/><rect x="74" y="432" width="7" height="7" fill="#000000"/><rect x="82" y="432" width="7" height="7" fill="#040303"/><rect x="90" y="432" width="7" height="7" fill="#090606"/><rect x="98" y="432" width="7" height="7" fill="#0e0a0a"/><rect x="106" y="432" width="7" height="7" fill="#120d0d"/><rect x="114" y="432" width="8" height="7" fill="#171010"/><rect x="123" y="432" width="7" height="7" fill="#1c1414"/><rect x="131" y="432" width="7" height="7" fill="#201717"/><rect x="139" y="432" width="7" height="7" fill="#251a1a"/><rect x="147" y="432" width="7" height="7" fill="#2a1e1e"/><rect x="1" y="440" width="7" height="7" fill="#000000"/><rect x="9" y="440" width="7" height="7" fill="#000000"/><rect x="17" y="440" width="7" height="7" fill="#000000"/><rect x="25" y="440" width="7" height="7" fill="#000000"/><rect x="33" y="440" width="8" height="7" fill="#000000"/><rect x="42" y="440" width="7" height="7" fill="#000000"/><rect x="50" y="440" width="7" height="7" fill="#000000"/><rect x="58" y="440" width="7" height="7" fill="#000000"/><rect x="66" y="440" width="7" height="7" fill="#000000"/><rect x="74" y="440" width="7" height="7" fill="#000000"/><rect x="82" y="440" width="7" height="7" fill="#040303"/><rect x="90" y="440" width="7" height="7" fill="#090606"/><rect x="98" y="440" width="7" height="7" fill="#0e0909"/><rect x="106" y="440" width="7" height="7" fill="#120d0d"/><rect x="114" y="440" width="8" height="7" fill="#171010"/><rect x="123" y="440" width="7" height="7" fill="#1c1313"/><rect x="131" y="440" width="7" height="7" fill="#201717"/><rect x="139" y="440" width="7" height="7" fill="#251a1a"/><rect x="147" y="440" width="7" height="7" fill="#2a1d1d"/><rect x="1" y="448" width="7" height="7" fill="#000000"/><rect x="9" y="448" width="7" height="7" fill="#000000"/><rect x="17" y="448" width="7" height="7" fill="#000000"/><rect x="25" y="448" width="7" height="7" fill="#000000"/><rect x="33" y="448" width="8" height="7" fill="#000000"/><rect x="42" y="448" width="7" height="7" fill="#000000"/><rect x="50" y="448" width="7" height="7" fill="#000000"/><rect x="58" y="448" width="7" height="7" fill="#000000"/><rect x="66" y="448" width="7" height="7" fill="#000000"/><rect x="74" y="448" width="7" height="7" fill="#000000"/><rect x="82" y="448" width="7" height="7" fill="#040303"/><rect x="90" y="448" width="7" height="7" fill="#090606"/><rect x="98" y="448" width="7" height="7" fill="#0e0909"/><rect x="106" y="448" width="7" height="7" fill="#120d0d"/><rect x="114" y="448" width="8" height="7" fill="#171010"/><rect x="123" y="448" width="7" height="7" fill="#1c1313"/><rect x="131" y="448" width="7" height="7" fill="#201717"/><rect x="139" y="448" width="7" height="7" fill="#251a1a"/><rect x="147" y="448" width="7" height="7" fill="#2a1d1d"/><rect x="1" y="456" width="7" height="7" fill="#000000"/><rect x="9" y="456" width="7" height="7" fill="#000000"/><rect x="17" y="456" width="7" height="7" fill="#000000"/><rect x="25" y="456" width="7" height="7" fill="#000000"/><rect x="33" y="456" width="8" height="7" fill="#000000"/><rect x="42" y="456" width="7" height="7" fill="#000000"/><rect x="50" y="456" width="7" height="7" fill="#000000"/><rect x="58" y="456" width="7" height="7" fill="#000000"/><rect x="66" y="456" width="7" height="7" fill="#000000"/><rect x="74" y="456" width="7" height="7" fill="#000000"/><rect x="82" y="456" width="7" height="7" fill="#040303"/><rect x="90" y="456" width="7" height="7" fill="#090606"/><rect x="98" y="456" width="7" height="7" fill="#0e0909"/><rect x="106" y="456" width="7" height="7" fill="#120d0d"/><rect x="114" y="456" width="8" height="7" fill="#171010"/><rect x="123" y="456" width="7" height="7" fill="#1c1313"/><rect x="131" y="456" width="7" height="7" fill="#201616"/><rect x="139" y="456" width="7" height="7" fill="#251a1a"/><rect x="147" y="456" width="7" height="7" fill="#2a1d1d"/></svg>
<div class="a" style="left:210px;top:802px;width:9px;height:9px;border:2px solid #f07a8a;background:#111"></div>
<div class="a" style="left:211px;top:803px;width:7px;height:7px;border:1px solid #fff"></div>
<div class="a" style="left:105px;top:1062px;width:9px;height:9px;background:#d40000;border:1px solid #800"></div>
<div class="a" style="left:145px;top:1062px;width:9px;height:9px;background:#00b000;border:1px solid #060"></div>
<div class="a" style="left:183px;top:1062px;width:9px;height:9px;background:#0000e0;border:1px solid #008"></div>

<!-- ============ CANVAS AREA ============ -->
<div class="a" style="left:303px;top:90px;width:692px;height:983px;background:#393939"></div>
<div class="a" style="left:304px;top:90px;width:130px;height:24px;background:#6a7899"></div>
<div class="t" style="left:309px;top:96px;font-size:12.5px;color:#e4e8f0">joshua real barrier*</div>
<div class="a" style="left:419px;top:99px;width:7px;height:7px;border-radius:50%;background:#c8ccd8"></div>
<svg class="a" style="left:980px;top:96px" width="14" height="14"><path class="ic" d="M3 5l4 4 4-4" style="stroke-width:1.3"/></svg>
<!-- rulers -->
<div class="a" style="left:304px;top:114px;width:676px;height:17px;background:#4e4e4e"></div>
<div class="a" style="left:304px;top:131px;width:676px;height:1px;background:#c8c8c8"></div>
<div class="a" style="left:304px;top:114px;width:17px;height:926px;background:#4e4e4e"></div>
<div class="a" style="left:321px;top:114px;width:1px;height:926px;background:#c8c8c8"></div>
<div class="a" style="left:979px;top:114px;width:1px;height:18px;background:#c8c8c8"></div>
<div class="a" style="left:357px;top:114px;width:1px;height:17px;background:#c8c8c8"></div>
<div class="t" style="left:360px;top:117px;font-size:10px;color:#d0d0d0">0</div>
<div class="a" style="left:541px;top:126px;width:1px;height:5px;background:#c8c8c8"></div>
<div class="a" style="left:726px;top:126px;width:1px;height:5px;background:#c8c8c8"></div>
<div class="a" style="left:909px;top:126px;width:1px;height:5px;background:#c8c8c8"></div>
<div class="a" style="left:304px;top:223px;width:17px;height:1px;background:#c8c8c8"></div>
<div class="t" style="left:307px;top:231.5px;font-size:11px;color:#d8d8d8;transform:rotate(-90deg);transform-origin:0 0">0</div>
<div class="a" style="left:316px;top:407px;width:5px;height:1px;background:#c8c8c8"></div>
<div class="a" style="left:316px;top:591px;width:5px;height:1px;background:#c8c8c8"></div>
<div class="a" style="left:316px;top:776px;width:5px;height:1px;background:#c8c8c8"></div>
<div class="a" style="left:316px;top:960px;width:5px;height:1px;background:#c8c8c8"></div>
<!-- canvas bg -->
<div class="a" style="left:322px;top:132px;width:657px;height:908px;background:#2e2e2e"></div>
<!-- v scrollbar -->
<div class="a" style="left:980px;top:114px;width:14px;height:926px;background:#484848"></div>
<div class="a" style="left:980px;top:115px;width:14px;height:14px;background:#555"></div>
<svg class="a" style="left:980px;top:115px" width="14" height="14"><path class="ic" d="M3 9l4-4 4 4" style="stroke-width:1.2"/></svg>
<div class="a" style="left:981px;top:383px;width:11px;height:383px;border-radius:6px;background:#5e5e5e"></div>
<div class="a" style="left:980px;top:1025px;width:14px;height:15px;background:#555"></div>
<svg class="a" style="left:980px;top:1025px" width="14" height="15"><path class="ic" d="M3 6l4 4 4-4" style="stroke-width:1.2"/></svg>
<div class="a" style="left:979px;top:114px;width:1px;height:18px;background:#c8c8c8"></div>
<!-- status bar -->
<div class="a" style="left:304px;top:1040px;width:690px;height:15px;background:#4a4a4a"></div>
<div class="a" style="left:305px;top:1040px;width:121px;height:15px;border:1px solid #787878;background:#353535"></div>
<svg class="a" style="left:306px;top:1041px" width="119" height="13"><path d="M0 0H119L0 13z" style="fill:#4b4b4b"/></svg>
<div class="a" style="left:359px;top:1040px;width:5px;height:15px;background:#626262;border-left:1px solid #7a7a7a;border-right:1px solid #7a7a7a"></div>
<div class="t" style="left:307px;top:1041px;font-size:14px;color:#f0f0f0">37.7</div>
<svg class="a" style="left:426px;top:1040px" width="75" height="15"><path class="ic" d="M8 7.5h10 M33 7.5h10 M38 2.5v10" style="stroke-width:1.6"/><rect x="58" y="3" width="8" height="8" class="fl"/></svg>
<div class="a" style="left:500px;top:1040px;width:121px;height:15px;border:1px solid #787878;background:#4b4b4b"></div>
<svg class="a" style="left:501px;top:1041px" width="119" height="13"><path d="M0 0h5v13H0z M40 13c8-1 14-4 17-8v8z M62 13c3-8 8-12 18-12h10c10 0 20 8 29 12z" style="fill:#343434"/></svg>
<div class="a" style="left:558px;top:1040px;width:5px;height:15px;background:#626262;border-left:1px solid #7a7a7a;border-right:1px solid #7a7a7a"></div>
<div class="t" style="left:506px;top:1041px;font-size:14px;color:#f0f0f0">0.0</div>
<svg class="a" style="left:621px;top:1040px" width="100" height="15"><g class="ic" style="stroke-width:1.5"><path d="M9 11a5 5 0 118 0 M9 4v4h4" transform="translate(0,0)"/><path d="M40 11a5 5 0 10-8 0 M40 4v4h-4"/><circle cx="62" cy="8" r="5.5"/><path d="M62 2v5"/></g><circle cx="62" cy="8" r="1.8" class="fl"/></svg>
<div class="a" style="left:696px;top:1040px;width:14px;height:15px;background:#555"></div>
<svg class="a" style="left:696px;top:1040px" width="14" height="15"><path class="ic" d="M9 4l-3.5 3.5L9 11" style="stroke-width:1.2"/></svg>
<div class="a" style="left:787px;top:1042px;width:106px;height:12px;border-radius:6px;background:#5e5e5e"></div>
<div class="a" style="left:964px;top:1040px;width:15px;height:15px;background:#555"></div>
<svg class="a" style="left:964px;top:1040px" width="15" height="15"><path class="ic" d="M6 4l3.5 3.5L6 11" style="stroke-width:1.2"/></svg>
<svg class="a" style="left:304px;top:1055px" width="30" height="18"><path class="ic" d="M8 9l5-4 5 4 M8 14l5-4 5 4" style="stroke:#9a9a9a;stroke-width:1.3"/></svg>
<!-- blue canvas -->
<div class="a" style="left:356px;top:222px;width:555px;height:739px;background:#0f2a33"></div>
<div class="a" style="left:357px;top:223px;width:553px;height:737px;background:#54b0da"></div>
<svg class="a" id="art" style="left:357px;top:223px;overflow:hidden" width="553" height="737" viewBox="357 223 553 737">
 <!-- right sleeve -->
 <path fill="#b2c5e6" d="M606 481 L626 480 L641 480 L646 494 L646 544 L641 600 L639 642 L618 698 L601 742 L595 737 L593 707 L574 702 L572 692 L585 682 L597 642 L603 590 L603 523 Z"/>
 <path fill="#a9bde0" d="M625 490 L641 484 L645 520 L640 600 L630 660 L612 710 L606 700 L622 640 L632 580 Z" opacity=".5"/>
 <!-- left sleeve upper -->
 <path fill="#b2c5e6" d="M446 527 L434 540 L429 552 L430 565 L441 586 L451 592 L472 628 L475 600 L458 540 Z"/>
 <!-- left sleeve lower -->
 <path fill="#b2c5e6" d="M463 662 L452 671 L437 693 L438 703 L444 703 L463 684 Z"/>
 <!-- vest -->
 <path fill="#f0e3db" d="M442 531 L450 516 L458 506 L482 492 L489 490 L495 517 L526 532 L537 513 L551 496 L564 507 L566 467 L583 466 L608 471 L626 482 L612 494 L603 523 L603 590 L599 632 L591 669 L580 688 L545 693 L503 692 L458 689 L453 679 L468 660 L472 628 L462 592 L449 565 Z"/>
 <path fill="#f5e6dd" d="M566 470 L600 474 L612 490 L600 560 L580 520 Z" opacity=".6"/>
 <!-- shirt collar -->
 <path fill="#b9cdea" d="M488 490 L495 474 L520 468 L545 458 L564 467 L566 509 L551 496 L540 512 L526 532 L510 515 L494 519 Z"/>
 <path fill="#6c87a6" d="M488 490 L496 504 L494 491 Z"/>
 <path fill="#6c87a6" d="M494 517 L510 514 L527 521 L541 511 L526 534 Z"/>
 <path fill="#9fb6d8" d="M545 459 L548 470 L552 494 L566 508 L564 467 Z" opacity=".6"/>
 <!-- neck -->
 <path fill="#eab8a6" d="M489 452 L494 466 L501 476 L508 492 L517 505 L529 516 L542 502 L549 485 L549 455 Z"/>
 <path fill="#e4928a" d="M497 458 L503 474 L516 479 L534 476 L546 468 L548 456 Z"/>
 <!-- face -->
 <path fill="#f2cab8" d="M478 415 L492 405 L512 396 L522 380 L535 385 L548 394 L556 404 L557 418 L553 436 L548 456 L537 466 L522 467 L506 462 L491 453 L482 441 L477 428 Z"/>
 <path fill="#e9a596" d="M483 444 L492 455 L506 463 L522 468 L537 467 L547 459 L537 463 L522 463 L505 457 L492 449 Z"/>
 <path fill="#eab3a0" d="M548 400 L557 405 L556 430 L551 450 L549 420 Z" opacity=".7"/>
 <path fill="#eab3a2" d="M468 426 L480 421 L486 445 L493 466 L484 462 L472 447 Z"/>
 <path fill="#e9b3a3" d="M480 438 L492 451 L502 461 L497 471 L487 464 Z"/>
 <!-- ear -->
 <path fill="#e8ac9a" d="M466 428 L463 437 L469 445 L481 448 L482 432 Z"/>
 <!-- hair -->
 <path fill="#1d1517" d="M440 410 L446 403 L447 389 L449.5 376 L460 365 L472.5 356.5 L488 347.5 L506 342 L524 343 L540 351 L552 363.5 L557.5 378 L559 390 L557.5 401 L554 406 L551 405 L546 401 L540 398 L534 397 L529 404 L524 395 L520 386 L516 404 L507 409 L494 413 L485 422 L480 429 L478 440 L481 454 L488 463 L494 470 L485 466.5 L474 454 L469 436 L460 431 L455 425.5 L451 418.5 L443 413 Z"/>
 <path fill="#3a2628" d="M462 372 L480 360 L500 352 L486 366 L470 384 Z M530 352 L545 362 L550 378 L538 366 Z" opacity=".6"/>
 <path fill="#f0c2b0" d="M520 386 L524 389 L523 396 L519 395 Z"/>
 <!-- ear front -->
 <path fill="#ebb09e" d="M463 431 L468 427 L476 429 L482 435 L485 446 L478 449 L469 444 Z"/>
 <path fill="#d98c80" d="M470 433 L476 435 L478 444 L473 441 Z" opacity=".6"/>
 <!-- eyes -->
 <path fill="#f7ece6" d="M493 419 Q501 411 513 414 Q510 421 502 422 Q497 422 493 419 Z"/>
 <path fill="#f7ece6" d="M533 409 Q541 402 550 404 Q547 410 541 411 Q536 411 533 409 Z"/>
 <path d="M488 420 Q499 409 515 412" stroke="#15131a" stroke-width="2" fill="none"/>
 <ellipse cx="505.5" cy="416.5" rx="4.2" ry="3.8" fill="#1b2745"/>
 <path d="M530 409 Q540 400 551 402" stroke="#15131a" stroke-width="2" fill="none"/>
 <ellipse cx="541" cy="406" rx="3.8" ry="3.5" fill="#1b2745"/>
 <!-- nose / lips -->
 <path d="M525 428 L532 437 L527 439" stroke="#cf8f80" stroke-width="1.3" fill="none"/>
 <path fill="#c46d68" d="M521 452 Q531 444 543 445 Q537 452 521 452 Z"/>
 <!-- signature -->
 <path d="M540 697 L543 686 L547 695 L548 683 M551 690 L557 688 M550 684 L555 682 M551 694 L556 692 M551 684 L551 694 M562 681 Q556 682 558 690 Q560 693 564 690 M566 679 L571 678 L567 690 M575 681 Q571 682 573 687 Q576 689 577 684 Q577 680 575 681 M582 674 L580 686 M581 674 L586 673 M581 680 L585 679 M589 671 L588 682 L592 681 M596 670 Q592 671 593 676 Q596 679 597 674 Q598 669 596 670 M600 668 L599 680 M600 668 Q605 668 602 673 L600 673" stroke="#1f2a30" stroke-width="1.3" fill="none"/>
</svg>

<!-- ============ RIGHT PANEL ============ -->
<div class="a" style="left:994px;top:83px;width:206px;height:990px;background:#363636"></div>
<div class="a" style="left:996px;top:86px;width:22px;height:18px;background:#3c3c3c"></div>
<div class="a" style="left:1018px;top:86px;width:70px;height:18px;background:#4d4d4d"></div>
<div class="a" style="left:1089px;top:86px;width:37px;height:18px;background:#474747"></div>
<div class="a" style="left:1127px;top:86px;width:36px;height:18px;background:#474747"></div>
<div class="a" style="left:1164px;top:86px;width:36px;height:18px;background:#474747"></div>
<div class="a" style="left:996px;top:104px;width:204px;height:480px;background:#505050"></div>
<div class="t" style="left:1052px;top:93px;font-size:11px;color:#d8d8d8">Color</div>
<svg class="a" style="left:994px;top:83px" width="206" height="30">
 <path class="ic" style="stroke:#9a9a9a;stroke-width:1.2" d="M8 10h10 M8 14h10 M8 18h10"/>
 <circle class="ic" cx="41" cy="15" r="7.5" style="stroke-width:1.4"/><rect x="37.5" y="11.5" width="7" height="7" rx="1" class="fl"/>
 <g class="ic" style="stroke:#8a8a8a;stroke-width:1.2"><rect x="104" y="8" width="14" height="13"/><path d="M107 8v13 M115 8v13"/><path d="M136 12h13v9h-13z M138 10h12v9"/><circle cx="188" cy="17" r="8"/><path d="M188 14v7"/></g>
</svg>
<!-- color wheel -->
<div class="a" style="left:997px;top:237px;width:200px;height:200px;border-radius:50%;box-shadow:0 0 0 1px #3c3c3c;background:conic-gradient(from -58deg,#ee1a1a,#e8e81c,#1ee81e,#1ce8e8,#1a1aee,#e81ae8,#ee1a1a);"></div>
<div class="a" style="left:1013px;top:253px;width:168px;height:168px;border-radius:50%;background:#505050;box-shadow:0 0 0 1px #3a3a3a"></div>

<div class="a" style="left:1044px;top:284px;width:107px;height:106px;box-shadow:0 0 0 1px #3a3a3a;background:linear-gradient(0deg,#000,rgba(0,0,0,0)),linear-gradient(90deg,#fff,#f00)"></div>
<div class="a" style="left:1011px;top:285px;width:16px;height:10px;border:2px solid #fff;outline:1px solid #222;background:#e00;transform:rotate(32deg)"></div>
<div class="a" style="left:1038px;top:384px;width:12px;height:12px;border-radius:50%;border:2px solid #fff;box-shadow:0 0 0 1px #222, inset 0 0 0 1px #222"></div>
<!-- swatches -->
<div class="a" style="left:1009px;top:543px;width:23px;height:24px;border-radius:4px;border:1px solid #777;background:#505050"></div>
<div class="a" style="left:1013px;top:547px;width:15px;height:16px;background:#fff"></div>
<div class="a" style="left:996px;top:533px;width:24px;height:25px;border-radius:4px;background:#8795c8"></div>
<div class="a" style="left:999px;top:536px;width:18px;height:19px;border-radius:2px;background:#000"></div>
<div class="a" style="left:996px;top:569px;width:36px;height:13px;border-radius:5px;border:1px solid #777"></div>
<svg class="a" style="left:999px;top:572px" width="30" height="7"><rect x="0.0" y="0.0" width="5.1" height="3.4" fill="#fff"/><rect x="5.0" y="0.0" width="5.1" height="3.4" fill="#8e8e8e"/><rect x="10.0" y="0.0" width="5.1" height="3.4" fill="#fff"/><rect x="15.0" y="0.0" width="5.1" height="3.4" fill="#8e8e8e"/><rect x="20.0" y="0.0" width="5.1" height="3.4" fill="#fff"/><rect x="25.0" y="0.0" width="5.1" height="3.4" fill="#8e8e8e"/><rect x="0.0" y="3.3" width="5.1" height="3.4" fill="#8e8e8e"/><rect x="5.0" y="3.3" width="5.1" height="3.4" fill="#fff"/><rect x="10.0" y="3.3" width="5.1" height="3.4" fill="#8e8e8e"/><rect x="15.0" y="3.3" width="5.1" height="3.4" fill="#fff"/><rect x="20.0" y="3.3" width="5.1" height="3.4" fill="#8e8e8e"/><rect x="25.0" y="3.3" width="5.1" height="3.4" fill="#fff"/></svg>
<div class="a" style="left:1050px;top:569px;width:10px;height:9px;border-radius:1.5px;background:#c8c8c8"></div>
<div class="a" style="left:1089px;top:569px;width:10px;height:9px;border-radius:1.5px;background:#c8c8c8"></div>
<div class="a" style="left:1128px;top:569px;width:10px;height:9px;border-radius:1.5px;background:#c8c8c8"></div>
<div class="t" style="left:1051px;top:569.5px;font-size:9px;font-weight:bold;color:#505050">H</div>
<div class="t" style="left:1091px;top:569.5px;font-size:9px;font-weight:bold;color:#505050">S</div>
<div class="t" style="left:1129.5px;top:569.5px;font-size:9px;font-weight:bold;color:#505050">V</div>
<div class="t" style="left:1075px;top:567px;font-size:14px;color:#e8e8e8">1</div>
<div class="t" style="left:1114px;top:567px;font-size:14px;color:#e8e8e8">0</div>
<div class="t" style="left:1153px;top:567px;font-size:14px;color:#e8e8e8">0</div>
<svg class="a" style="left:1172px;top:557px" width="26" height="26"><circle class="ic" cx="12" cy="12.5" r="9.5" style="stroke-width:1.5"/><path class="ic" d="M9 7.5v10l8-5z" style="stroke-width:1.4"/></svg>
<!-- layer panel -->
<div class="a" style="left:996px;top:589px;width:22px;height:17px;background:#3c3c3c"></div>
<div class="a" style="left:1018px;top:589px;width:65px;height:17px;background:#4d4d4d"></div>
<div class="a" style="left:1085px;top:589px;width:35px;height:17px;background:#474747"></div>
<div class="a" style="left:1121px;top:589px;width:36px;height:17px;background:#474747"></div>
<div class="a" style="left:996px;top:606px;width:204px;height:87px;background:#4a4a4a"></div>
<div class="t" style="left:1053px;top:595px;font-size:11px;color:#d8d8d8">Layer</div>
<svg class="a" style="left:994px;top:583px" width="206" height="110">
 <path class="ic" style="stroke:#9a9a9a;stroke-width:1.2" d="M8 11h10 M8 15h10 M8 19h10"/>
 <g class="ic" style="stroke-width:1.3"><path d="M34 14l8-4 8 4-8 4z M34 18l8 4 8-4 M34 22l8 4 8-4"/></g>
 <g class="ic" style="stroke:#8a8a8a;stroke-width:1.3"><path d="M100 15h18 M100 21h18"/><circle cx="106" cy="15" r="2" class="fl" style="fill:#8a8a8a"/><circle cx="111" cy="21" r="2" style="fill:#8a8a8a"/><rect x="132" y="11" width="14" height="12" rx="2"/><path d="M135 15h4 M135 19h8"/></g>
 <!-- row1 -->
 <rect x="3.5" y="30.5" width="47" height="24" rx="2" style="fill:#555;stroke:#666"/>
 <rect x="9.5" y="34.5" width="18" height="16" rx="2" class="ic" style="stroke:#9a9a9a;stroke-width:1.2"/>
 <path class="ic" d="M36 40l4.5 4.5 4.5-4.5" style="stroke-width:1.2"/>
 <rect x="54.5" y="30.5" width="49" height="24" rx="2" style="fill:#555;stroke:#666"/>
 <path class="ic" d="M89 40l4.5 4.5 4.5-4.5" style="stroke-width:1.2"/>
 <g><rect x="111" y="37" width="44" height="11" fill="#bbb"/>
 <g fill="#eee"><rect x="111" y="37" width="5.5" height="5.5"/><rect x="122" y="37" width="5.5" height="5.5"/><rect x="133" y="37" width="5.5" height="5.5"/><rect x="144" y="37" width="5.5" height="5.5"/><rect x="116.5" y="42.5" width="5.5" height="5.5"/><rect x="127.5" y="42.5" width="5.5" height="5.5"/><rect x="138.5" y="42.5" width="5.5" height="5.5"/><rect x="149.5" y="42.5" width="5.5" height="5.5"/></g></g>
 <rect x="155" y="30" width="4" height="25" rx="1" fill="#777"/>
 <path class="ic" d="M192 40l5-5 5 5 M192 45l5 5 5-5" style="stroke-width:1.2"/>
 <!-- row2 icons -->
 <g class="ic" style="stroke-width:1.4">
  <rect x="10" y="59" width="12" height="12" rx="2" stroke-dasharray="2 1.6"/>
  <path d="M35 62l3 2 M49 62l-3 2 M33 66.5h3 M48 66.5h3"/>
  <path d="M58 60h8v8l-4 8-4-8z M62 76c3 2 5 0 8-2 M68 73l3 1-1 3"/>
  <rect x="81" y="66" width="12" height="11" rx="2" class="fl"/><path d="M83.5 66v-3a3.5 3.5 0 017 0v3"/>
  <rect x="103" y="70" width="9" height="8" rx="1.5" class="fl"/><path d="M105 70v-2a2.5 2.5 0 015 0v2"/>
 </g>
 <path d="M7 63h10v13H7z" fill="#aaa"/><rect x="10" y="59" width="12" height="12" rx="2" fill="#c4c4c4" />
 <path d="M40.5 61h3v2.5h2.5v3h-8v-3h2.5z M39 67.5h6l2 11.5H37z" fill="#c4c4c4"/>
 <g fill="#c4c4c4"><rect x="107" y="59" width="5" height="5"/><rect x="117" y="59" width="5" height="5"/><rect x="112" y="64" width="5" height="5"/><rect x="117" y="69" width="5" height="5"/></g>
 <rect x="131" y="59" width="15" height="15" rx="3" style="fill:#6a6a6a"/><circle cx="138" cy="66" r="4" style="fill:#4a4a4a"/>
 <g class="ic" style="stroke:#7a7a7a;stroke-width:1.6"><line x1="140.5" y1="70.5" x2="147.5" y2="77.5"/><line x1="147.5" y1="70.5" x2="140.5" y2="77.5"/><path d="M152 64.5l4 4 4-4" style="stroke-width:1.2"/></g>
 <path d="M168 59h15l-15 16z" style="fill:#6a6a6a"/><path d="M171 62h7l-7 7.5z" style="fill:#4a4a4a"/>
 <g class="ic" style="stroke:#7a7a7a;stroke-width:1.6"><line x1="176.5" y1="70.5" x2="183.5" y2="77.5"/><line x1="183.5" y1="70.5" x2="176.5" y2="77.5"/><path d="M187 64.5l4 4 4-4" style="stroke-width:1.2"/></g>
 <!-- row3 icons -->
 <g class="ic" style="stroke-width:1.4">
  <path d="M14 97v-7.5a1.5 1.5 0 011.5-1.5H28a1.5 1.5 0 011.5 1.5V96 M14 97l4 4h5"/><path d="M14 97l4 4v-4z" fill="#c4c4c4"/><circle cx="28" cy="101" r="4.5" style="fill:#4a4a4a"/><path d="M28 98.5v5 M25.5 101h5"/>
  <rect x="38" y="88" width="15" height="14" rx="2"/><path d="M41 94l4-2 4 2v4l-4 2-4-2z"/><circle cx="52" cy="101" r="4.5" style="fill:#4a4a4a"/><path d="M52 98.5v5 M49.5 101h5"/>
  <path d="M76 101c-4 0-15 0-15 0v-12h7l2 2h9v6" class="fl"/><circle cx="76" cy="101" r="4.5" style="fill:#4a4a4a"/><path d="M76 98.5v5 M73.5 101h5"/>
 </g>
 <g class="ic" style="stroke:#6e6e6e;stroke-width:1.4"><rect x="92" y="87" width="11" height="10" rx="2"/><path d="M99 96v6h-11v-9h4 M92 101l-3-3 3-3"/><rect x="118" y="87" width="10" height="10" rx="2"/><path d="M120 97v5h-10v-9h5 M118 91l-5 6h4"/></g>
 <rect x="136" y="86" width="17" height="17" rx="3" class="fl"/><circle cx="144.5" cy="94.5" r="5" fill="#4a4a4a"/>
 <g class="ic" style="stroke:#6e6e6e;stroke-width:1.4"><rect x="166" y="88" width="14" height="14" rx="2"/><circle cx="177" cy="96" r="3.5" fill="#6e6e6e"/><path d="M160 92h6 M163 90l-3 2 3 2"/></g>
 <g class="ic" style="stroke-width:1.4"><path d="M186 90h13 M189 90v-2h7v2 M187 90l1.5 13h8l1.5-13 M190.5 93v7 M192.5 93v7 M194.5 93v7"/></g>
</svg>
<div class="t" style="left:1053px;top:619px;font-size:14px;color:#dcdcdc;width:30px;overflow:hidden;-webkit-mask-image:linear-gradient(90deg,#000 55%,transparent)">Normal</div>
<div class="t" style="left:1158px;top:618px;font-size:15px;color:#efefef">100</div>
<!--LAYERS-->
<div class="a" style="left:994px;top:692px;width:206px;height:381px;background:#2c2c2c"></div>
<div class="a" style="left:1184px;top:692px;width:16px;height:381px;background:#434343"></div>
<div class="a" style="left:996px;top:1069px;width:188px;height:4px;background:#3d3d3d"></div>
<div class="a" style="left:996px;top:694px;width:24px;height:40px;background:#3d3d3d"></div>
<div class="a" style="left:1022px;top:694px;width:21px;height:40px;background:#3d3d3d"></div>
<div class="a" style="left:1044px;top:694px;width:140px;height:40px;background:#66718e"></div>
<svg class="a" style="left:996px;top:702px" width="22" height="18"><path d="M3.5 13.5C4 5.5 19 5.5 19.5 13.5" style="fill:none;stroke:#c8c8c8;stroke-width:1.7"/><circle cx="11.5" cy="11.6" r="3.7" fill="#c8c8c8"/></svg>
<svg class="a" style="left:1021px;top:704px" width="20" height="20"><path d="M5 13l9-10c1-1 2.5-1 3 0s0 2-.5 3l-9 10z M3 17l1.5-4 3 2.5z" fill="#c4c4c4"/><path d="M2 17.5h17" stroke="#c4c4c4" stroke-width="1.3"/></svg>
<div class="a" style="left:1050px;top:698px;width:26px;height:32px;background:#fff"></div>
<div class="a" style="left:1052px;top:700px;width:22px;height:28px;background:#111"></div>
<svg class="a" style="left:1054px;top:702px;overflow:hidden" width="18" height="24"><rect width="18" height="24" fill="#fff"/><g fill="#cdcdcd"><rect x="4.5" y="0.0" width="4.5" height="4.5"/><rect x="13.5" y="0.0" width="4.5" height="4.5"/><rect x="0.0" y="4.5" width="4.5" height="4.5"/><rect x="9.0" y="4.5" width="4.5" height="4.5"/><rect x="18.0" y="4.5" width="4.5" height="4.5"/><rect x="4.5" y="9.0" width="4.5" height="4.5"/><rect x="13.5" y="9.0" width="4.5" height="4.5"/><rect x="0.0" y="13.5" width="4.5" height="4.5"/><rect x="9.0" y="13.5" width="4.5" height="4.5"/><rect x="18.0" y="13.5" width="4.5" height="4.5"/><rect x="4.5" y="18.0" width="4.5" height="4.5"/><rect x="13.5" y="18.0" width="4.5" height="4.5"/><rect x="0.0" y="22.5" width="4.5" height="4.5"/><rect x="9.0" y="22.5" width="4.5" height="4.5"/><rect x="18.0" y="22.5" width="4.5" height="4.5"/></g></svg>
<div class="t" style="left:1085px;top:700px;font-size:14px;color:#e6e6e6">100 % Normal</div>
<div class="t" style="left:1085px;top:716px;font-size:14px;color:#e6e6e6">Layer 14</div>
<div class="a" style="left:996px;top:736px;width:24px;height:39px;background:#3d3d3d"></div>
<div class="a" style="left:1022px;top:736px;width:21px;height:39px;background:#3d3d3d"></div>
<div class="a" style="left:1044px;top:736px;width:140px;height:39px;background:#3d3d3d"></div>
<div class="a" style="left:1002px;top:749px;width:12px;height:12px;border:1.5px solid #2a2a2a;border-radius:2px"></div>
<div class="a" style="left:1026px;top:749px;width:12px;height:12px;border:1.5px solid #2a2a2a;border-radius:2px"></div>
<svg class="a" style="left:1046px;top:744px" width="42" height="26"><path d="M5 6l4.5 5-4.5 5" style="fill:none;stroke:#c8c8c8;stroke-width:1.5"/><path d="M21 6h6l2 2.5h9.5V21H21z" fill="#bdbdbd"/><path d="M21 10.5h17.5" stroke="#3d3d3d" stroke-width="1"/></svg>
<div class="t" style="left:1100px;top:742px;font-size:14px;color:#e6e6e6;letter-spacing:0.3px">18 %Multiply</div>
<div class="t" style="left:1099px;top:758px;font-size:14px;color:#e6e6e6">Folder 2</div>
<div class="a" style="left:996px;top:777px;width:24px;height:40px;background:#3d3d3d"></div>
<div class="a" style="left:1022px;top:777px;width:21px;height:40px;background:#3d3d3d"></div>
<div class="a" style="left:1044px;top:777px;width:140px;height:40px;background:#3d3d3d"></div>
<svg class="a" style="left:996px;top:785px" width="22" height="18"><path d="M3.5 13.5C4 5.5 19 5.5 19.5 13.5" style="fill:none;stroke:#c8c8c8;stroke-width:1.7"/><circle cx="11.5" cy="11.6" r="3.7" fill="#c8c8c8"/></svg>
<div class="a" style="left:1026px;top:790px;width:12px;height:12px;border:1.5px solid #2a2a2a;border-radius:2px"></div>
<div class="a" style="left:1053px;top:783px;width:20px;height:28px;background:#1c1c1c"></div>
<svg class="a" style="left:1054px;top:784px;overflow:hidden" width="18" height="26"><rect width="18" height="26" fill="#fff"/><g fill="#cdcdcd"><rect x="4.5" y="0.0" width="4.5" height="4.5"/><rect x="13.5" y="0.0" width="4.5" height="4.5"/><rect x="0.0" y="4.5" width="4.5" height="4.5"/><rect x="9.0" y="4.5" width="4.5" height="4.5"/><rect x="18.0" y="4.5" width="4.5" height="4.5"/><rect x="4.5" y="9.0" width="4.5" height="4.5"/><rect x="13.5" y="9.0" width="4.5" height="4.5"/><rect x="0.0" y="13.5" width="4.5" height="4.5"/><rect x="9.0" y="13.5" width="4.5" height="4.5"/><rect x="18.0" y="13.5" width="4.5" height="4.5"/><rect x="4.5" y="18.0" width="4.5" height="4.5"/><rect x="13.5" y="18.0" width="4.5" height="4.5"/><rect x="0.0" y="22.5" width="4.5" height="4.5"/><rect x="9.0" y="22.5" width="4.5" height="4.5"/><rect x="18.0" y="22.5" width="4.5" height="4.5"/></g></svg>
<div class="t" style="left:1085px;top:783px;font-size:14px;color:#e6e6e6">100 % Normal</div>
<div class="t" style="left:1085px;top:799px;font-size:14px;color:#e6e6e6">Layer 11</div>
<div class="a" style="left:996px;top:819px;width:24px;height:39px;background:#3d3d3d"></div>
<div class="a" style="left:1022px;top:819px;width:21px;height:39px;background:#3d3d3d"></div>
<div class="a" style="left:1044px;top:819px;width:140px;height:39px;background:#3d3d3d"></div>
<svg class="a" style="left:996px;top:827px" width="22" height="18"><path d="M3.5 13.5C4 5.5 19 5.5 19.5 13.5" style="fill:none;stroke:#c8c8c8;stroke-width:1.7"/><circle cx="11.5" cy="11.6" r="3.7" fill="#c8c8c8"/></svg>
<div class="a" style="left:1026px;top:832px;width:12px;height:12px;border:1.5px solid #2a2a2a;border-radius:2px"></div>
<div class="a" style="left:1053px;top:825px;width:20px;height:28px;background:#1c1c1c"></div>
<svg class="a" style="left:1054px;top:826px;overflow:hidden" width="18" height="26"><rect width="18" height="26" fill="#fff"/><g fill="#cdcdcd"><rect x="4.5" y="0.0" width="4.5" height="4.5"/><rect x="13.5" y="0.0" width="4.5" height="4.5"/><rect x="0.0" y="4.5" width="4.5" height="4.5"/><rect x="9.0" y="4.5" width="4.5" height="4.5"/><rect x="18.0" y="4.5" width="4.5" height="4.5"/><rect x="4.5" y="9.0" width="4.5" height="4.5"/><rect x="13.5" y="9.0" width="4.5" height="4.5"/><rect x="0.0" y="13.5" width="4.5" height="4.5"/><rect x="9.0" y="13.5" width="4.5" height="4.5"/><rect x="18.0" y="13.5" width="4.5" height="4.5"/><rect x="4.5" y="18.0" width="4.5" height="4.5"/><rect x="13.5" y="18.0" width="4.5" height="4.5"/><rect x="0.0" y="22.5" width="4.5" height="4.5"/><rect x="9.0" y="22.5" width="4.5" height="4.5"/><rect x="18.0" y="22.5" width="4.5" height="4.5"/></g></svg>
<div class="t" style="left:1085px;top:825px;font-size:14px;color:#e6e6e6">100 % Normal</div>
<div class="t" style="left:1085px;top:841px;font-size:14px;color:#e6e6e6">Layer 12</div>
<div class="a" style="left:996px;top:860px;width:24px;height:40px;background:#3d3d3d"></div>
<div class="a" style="left:1022px;top:860px;width:21px;height:40px;background:#3d3d3d"></div>
<div class="a" style="left:1044px;top:860px;width:140px;height:40px;background:#3d3d3d"></div>
<svg class="a" style="left:996px;top:868px" width="22" height="18"><path d="M3.5 13.5C4 5.5 19 5.5 19.5 13.5" style="fill:none;stroke:#c8c8c8;stroke-width:1.7"/><circle cx="11.5" cy="11.6" r="3.7" fill="#c8c8c8"/></svg>
<div class="a" style="left:1026px;top:873px;width:12px;height:12px;border:1.5px solid #2a2a2a;border-radius:2px"></div>
<div class="a" style="left:1053px;top:866px;width:20px;height:28px;background:#1c1c1c"></div>
<svg class="a" style="left:1054px;top:867px;overflow:hidden" width="18" height="26"><rect width="18" height="26" fill="#fff"/><g fill="#cdcdcd"><rect x="4.5" y="0.0" width="4.5" height="4.5"/><rect x="13.5" y="0.0" width="4.5" height="4.5"/><rect x="0.0" y="4.5" width="4.5" height="4.5"/><rect x="9.0" y="4.5" width="4.5" height="4.5"/><rect x="18.0" y="4.5" width="4.5" height="4.5"/><rect x="4.5" y="9.0" width="4.5" height="4.5"/><rect x="13.5" y="9.0" width="4.5" height="4.5"/><rect x="0.0" y="13.5" width="4.5" height="4.5"/><rect x="9.0" y="13.5" width="4.5" height="4.5"/><rect x="18.0" y="13.5" width="4.5" height="4.5"/><rect x="4.5" y="18.0" width="4.5" height="4.5"/><rect x="13.5" y="18.0" width="4.5" height="4.5"/><rect x="0.0" y="22.5" width="4.5" height="4.5"/><rect x="9.0" y="22.5" width="4.5" height="4.5"/><rect x="18.0" y="22.5" width="4.5" height="4.5"/></g></svg>
<div class="t" style="left:1085px;top:866px;font-size:14px;color:#e6e6e6">100 % Normal</div>
<div class="t" style="left:1085px;top:882px;font-size:14px;color:#e6e6e6">Layer 13</div>
<div class="a" style="left:996px;top:902px;width:24px;height:39px;background:#3d3d3d"></div>
<div class="a" style="left:1022px;top:902px;width:21px;height:39px;background:#3d3d3d"></div>
<div class="a" style="left:1044px;top:902px;width:140px;height:39px;background:#3d3d3d"></div>
<svg class="a" style="left:996px;top:910px" width="22" height="18"><path d="M3.5 13.5C4 5.5 19 5.5 19.5 13.5" style="fill:none;stroke:#c8c8c8;stroke-width:1.7"/><circle cx="11.5" cy="11.6" r="3.7" fill="#c8c8c8"/></svg>
<div class="a" style="left:1026px;top:915px;width:12px;height:12px;border:1.5px solid #2a2a2a;border-radius:2px"></div>
<div class="a" style="left:1053px;top:908px;width:20px;height:28px;background:#1c1c1c"></div>
<svg class="a" style="left:1054px;top:909px;overflow:hidden" width="18" height="26"><rect width="18" height="26" fill="#fff"/><g fill="#cdcdcd"><rect x="4.5" y="0.0" width="4.5" height="4.5"/><rect x="13.5" y="0.0" width="4.5" height="4.5"/><rect x="0.0" y="4.5" width="4.5" height="4.5"/><rect x="9.0" y="4.5" width="4.5" height="4.5"/><rect x="18.0" y="4.5" width="4.5" height="4.5"/><rect x="4.5" y="9.0" width="4.5" height="4.5"/><rect x="13.5" y="9.0" width="4.5" height="4.5"/><rect x="0.0" y="13.5" width="4.5" height="4.5"/><rect x="9.0" y="13.5" width="4.5" height="4.5"/><rect x="18.0" y="13.5" width="4.5" height="4.5"/><rect x="4.5" y="18.0" width="4.5" height="4.5"/><rect x="13.5" y="18.0" width="4.5" height="4.5"/><rect x="0.0" y="22.5" width="4.5" height="4.5"/><rect x="9.0" y="22.5" width="4.5" height="4.5"/><rect x="18.0" y="22.5" width="4.5" height="4.5"/></g></svg>
<div class="t" style="left:1085px;top:908px;font-size:14px;color:#e6e6e6">100 % Normal</div>
<div class="t" style="left:1085px;top:924px;font-size:14px;color:#e6e6e6">Layer 9</div>
<div class="a" style="left:996px;top:943px;width:24px;height:40px;background:#3d3d3d"></div>
<div class="a" style="left:1022px;top:943px;width:21px;height:40px;background:#3d3d3d"></div>
<div class="a" style="left:1044px;top:943px;width:140px;height:40px;background:#3d3d3d"></div>
<svg class="a" style="left:996px;top:951px" width="22" height="18"><path d="M3.5 13.5C4 5.5 19 5.5 19.5 13.5" style="fill:none;stroke:#c8c8c8;stroke-width:1.7"/><circle cx="11.5" cy="11.6" r="3.7" fill="#c8c8c8"/></svg>
<div class="a" style="left:1026px;top:956px;width:12px;height:12px;border:1.5px solid #2a2a2a;border-radius:2px"></div>
<div class="a" style="left:1053px;top:949px;width:20px;height:28px;background:#1c1c1c"></div>
<svg class="a" style="left:1054px;top:950px;overflow:hidden" width="18" height="26"><rect width="18" height="26" fill="#fff"/><g fill="#cdcdcd"><rect x="4.5" y="0.0" width="4.5" height="4.5"/><rect x="13.5" y="0.0" width="4.5" height="4.5"/><rect x="0.0" y="4.5" width="4.5" height="4.5"/><rect x="9.0" y="4.5" width="4.5" height="4.5"/><rect x="18.0" y="4.5" width="4.5" height="4.5"/><rect x="4.5" y="9.0" width="4.5" height="4.5"/><rect x="13.5" y="9.0" width="4.5" height="4.5"/><rect x="0.0" y="13.5" width="4.5" height="4.5"/><rect x="9.0" y="13.5" width="4.5" height="4.5"/><rect x="18.0" y="13.5" width="4.5" height="4.5"/><rect x="4.5" y="18.0" width="4.5" height="4.5"/><rect x="13.5" y="18.0" width="4.5" height="4.5"/><rect x="0.0" y="22.5" width="4.5" height="4.5"/><rect x="9.0" y="22.5" width="4.5" height="4.5"/><rect x="18.0" y="22.5" width="4.5" height="4.5"/></g></svg>
<div class="t" style="left:1085px;top:949px;font-size:14px;color:#e6e6e6">100 % Normal</div>
<div class="t" style="left:1085px;top:965px;font-size:14px;color:#e6e6e6">Layer 8</div>
<div class="a" style="left:996px;top:985px;width:24px;height:40px;background:#3d3d3d"></div>
<div class="a" style="left:1022px;top:985px;width:21px;height:40px;background:#3d3d3d"></div>
<div class="a" style="left:1044px;top:985px;width:140px;height:40px;background:#3d3d3d"></div>
<svg class="a" style="left:996px;top:993px" width="22" height="18"><path d="M3.5 13.5C4 5.5 19 5.5 19.5 13.5" style="fill:none;stroke:#c8c8c8;stroke-width:1.7"/><circle cx="11.5" cy="11.6" r="3.7" fill="#c8c8c8"/></svg>
<div class="a" style="left:1026px;top:998px;width:12px;height:12px;border:1.5px solid #2a2a2a;border-radius:2px"></div>
<div class="a" style="left:1053px;top:991px;width:20px;height:28px;background:#1c1c1c"></div>
<div class="a" style="left:1054px;top:992px;width:18px;height:26px;background:#54b0da"></div>
<div class="t" style="left:1085px;top:991px;font-size:14px;color:#e6e6e6">100 % Normal</div>
<div class="t" style="left:1085px;top:1007px;font-size:14px;color:#e6e6e6">Layer 10</div>
<div class="a" style="left:996px;top:1027px;width:24px;height:40px;background:#3d3d3d"></div>
<div class="a" style="left:1022px;top:1027px;width:21px;height:40px;background:#3d3d3d"></div>
<div class="a" style="left:1044px;top:1027px;width:140px;height:40px;background:#3d3d3d"></div>
<svg class="a" style="left:996px;top:1035px" width="22" height="18"><path d="M3.5 13.5C4 5.5 19 5.5 19.5 13.5" style="fill:none;stroke:#c8c8c8;stroke-width:1.7"/><circle cx="11.5" cy="11.6" r="3.7" fill="#c8c8c8"/></svg>
<div class="a" style="left:1026px;top:1040px;width:12px;height:12px;border:1.5px solid #2a2a2a;border-radius:2px"></div>
<div class="a" style="left:1053px;top:1033px;width:20px;height:28px;background:#1c1c1c"></div>
<div class="a" style="left:1054px;top:1034px;width:18px;height:26px;background:#fff"></div>
<div class="a" style="left:1090px;top:1030px;width:21px;height:20px;background:#fff"></div>
<svg class="a" style="left:1090px;top:1030px" width="21" height="20"><path d="M5.5 3.5h10v13h-6l-4-4z M5.5 12.5h4v4" style="fill:none;stroke:#333;stroke-width:1.4"/></svg>
<div class="t" style="left:1115px;top:1048px;font-size:14px;color:#e6e6e6">Paper</div>
<!--/LAYERS-->
</body></html>
